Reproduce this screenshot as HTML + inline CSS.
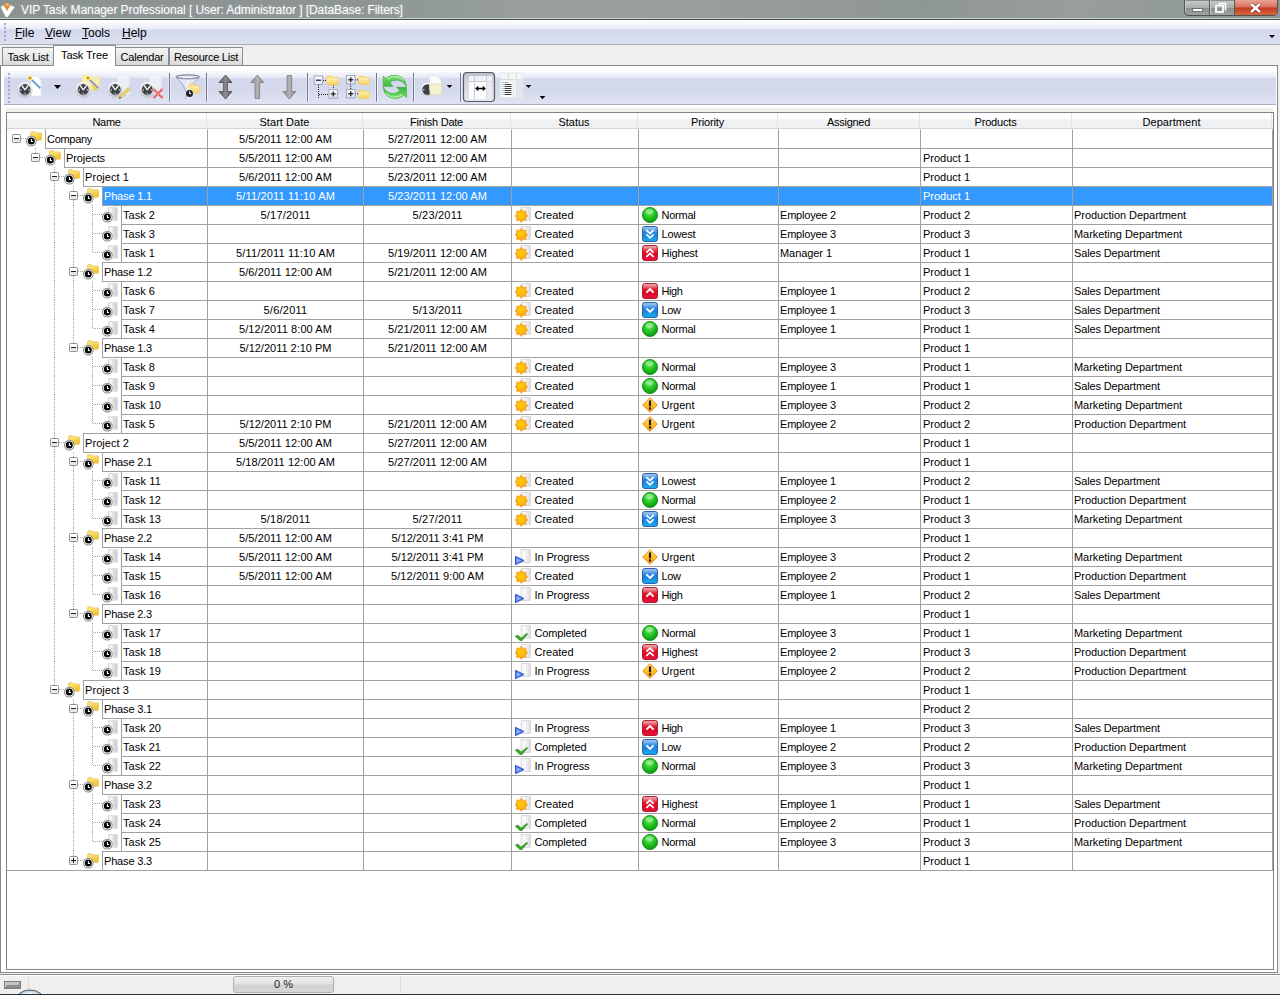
<!DOCTYPE html>
<html lang="en">
<head>
<meta charset="utf-8">
<title>VIP Task Manager Professional</title>
<style>
*{box-sizing:border-box;margin:0;padding:0}
html,body{width:1280px;height:995px;overflow:hidden;background:#f0f0f0}
body{position:relative;font-family:"Liberation Sans",sans-serif;font-size:11px;color:#000;line-height:1}
i{font-style:normal}
svg{display:block}
.abs{position:absolute}
/* ---------- title bar ---------- */
#title{position:absolute;left:0;top:0;width:1280px;height:18px;background:linear-gradient(100deg,#8a9292 0,#8d9595 28%,#999f9f 42%,#979d9d 58%,#8f9696 72%,#989e9e 84%,#8c9494 100%)}
#title .tx{position:absolute;left:21px;top:4px;font-size:12px;color:#fff;white-space:pre;letter-spacing:-.08px;text-shadow:0 0 3px rgba(255,255,255,.35)}
#tline1{position:absolute;left:0;top:18px;width:1280px;height:1px;background:#ccd0d0}
#tline2{position:absolute;left:0;top:19px;width:1280px;height:1px;background:#474c4c}
#wbtn{position:absolute;left:1184px;top:0;width:94px;height:16px}
/* ---------- menu ---------- */
#menu{position:absolute;left:0;top:20px;width:1280px;height:25px;background:linear-gradient(#fff 0,#fff 6%,#f6f6fb 16%,#eceef8 30%,#e8ebf7 36%,#d3d8eb 42%,#d5daed 56%,#dce0f1 100%);border-bottom:1px solid #a8abb5}
#menu .m{position:absolute;top:7px;font-size:12px;white-space:pre}
#menu .m u{text-decoration:underline;text-underline-offset:1px;text-decoration-thickness:1px}
.grip{position:absolute;width:2px;background:repeating-linear-gradient(#a3a9c6 0,#a3a9c6 2px,transparent 2px,transparent 4px)}
.grip:after{content:"";position:absolute;left:1px;top:1px;width:2px;height:100%;background:repeating-linear-gradient(rgba(255,255,255,.9) 0,rgba(255,255,255,.9) 2px,transparent 2px,transparent 4px);z-index:-1}
/* ---------- tabs ---------- */
.tab{position:absolute;top:47px;height:19px;border:1px solid #898c95;background:linear-gradient(#f4f4f4,#e9e9e9 50%,#d9d9d9);padding-top:4px;text-align:center;white-space:pre}
.tab.act{top:45px;height:21px;background:#fff;border-bottom:none;padding-top:3.5px;z-index:3}
#panel{position:absolute;left:0;top:65px;width:1278px;height:908px;background:#fff;border:1px solid #85888e}
/* ---------- toolbar ---------- */
#tb{position:absolute;left:4px;top:71px;width:1272px;height:34px;background:linear-gradient(#fafbfd 0,#f1f3fa 9%,#e8ebf7 19%,#d4d9ed 22%,#d3d8ec 55%,#dfe3f3 100%);border-bottom:1px solid #a9aec2}
.dd{position:absolute;width:0;height:0;border-left:3px solid transparent;border-right:3px solid transparent;border-top:3px solid #000}
/* ---------- grid ---------- */
#gridframe{position:absolute;left:6px;top:112px;width:1268px;height:858px;border:1px solid #808388;background:#fff}
#band{position:absolute;left:6px;top:108px;width:1267px;height:4px;background:#f0f0ee}
#hdrbg{position:absolute;left:7px;top:113px;width:1266px;height:16px;background:linear-gradient(#fff 0,#fff 38%,#f1f2f4 44%,#eff0f2 100%);border-bottom:1px solid #d5d5d5}
.h{position:absolute;top:113px;height:15px;text-align:center;padding-top:4px;border-right:1px solid #e2e3e6;white-space:pre}
.c{position:absolute;height:20px;border-left:1px solid #a0a0a0;border-bottom:1px solid #a0a0a0;border-top:1px solid #a0a0a0;padding:4px 0 0 1px;white-space:pre;overflow:hidden}
.c.last{border-right:1px solid #a0a0a0}
.c.r0{border-top-color:transparent}
.c.pr{padding-left:2px}
.c.ctr{text-align:center;padding-left:0}
.c.sel{background:#3399ff;color:#fff}
.c.wi{padding-left:0}
.c.wi .ic{position:absolute;left:3px;top:1px}
.c.wi .it{position:absolute;left:22.5px;top:4px}
.vl{position:absolute;width:1px;background-image:repeating-linear-gradient(#a8a8a8 0,#a8a8a8 1px,transparent 1px,transparent 2px)}
.hl{position:absolute;height:1px;background-image:repeating-linear-gradient(90deg,#a8a8a8 0,#a8a8a8 1px,transparent 1px,transparent 2px)}
.ex{position:absolute}
.ti{position:absolute;width:16px;height:16px}
/* ---------- status bar ---------- */
#sb{position:absolute;left:0;top:974px;width:1280px;height:21px;background:#f0efed;border-top:1px solid #8c8c8c;border-bottom:1px solid #303030}
#sb:before{content:"";position:absolute;left:0;top:0;width:1280px;height:1px;background:#fff}
#sb i{position:absolute;top:2px;width:1px;height:16px;background:#d9d9d9}
#prog{position:absolute;left:233px;top:976px;width:101px;height:17px;border:1px solid #aeaeae;border-radius:3px;background:linear-gradient(#efefef,#e3e3e3 45%,#d2d2d2 55%,#d6d6d6);text-align:center;padding-top:2px;color:#1a1a1a}
</style>
</head>
<body>
<svg width="0" height="0" style="position:absolute">
<defs>
<radialGradient id="gN" cx=".45" cy=".35" r=".7"><stop offset="0" stop-color="#6fe86a"/><stop offset=".5" stop-color="#20c41e"/><stop offset="1" stop-color="#0e8a10"/></radialGradient>
<linearGradient id="gB" x1="0" y1="0" x2="0" y2="1"><stop offset="0" stop-color="#b4d4f2"/><stop offset=".4" stop-color="#2a88e2"/><stop offset=".6" stop-color="#1a84e0"/><stop offset="1" stop-color="#1ab4ea"/></linearGradient>
<linearGradient id="gR" x1="0" y1="0" x2="0" y2="1"><stop offset="0" stop-color="#f2c4c8"/><stop offset=".4" stop-color="#e01a32"/><stop offset=".6" stop-color="#dc0a28"/><stop offset="1" stop-color="#ea1440"/></linearGradient>
<radialGradient id="gS" cx=".45" cy=".42" r=".6"><stop offset="0" stop-color="#ffd000"/><stop offset=".6" stop-color="#ffbe0a"/><stop offset="1" stop-color="#f8a41e"/></radialGradient>
<linearGradient id="gF" x1="0" y1="0" x2="1" y2="1"><stop offset="0" stop-color="#fbe070"/><stop offset=".5" stop-color="#f6cf44"/><stop offset="1" stop-color="#efbc2e"/></linearGradient>
<linearGradient id="gU" x1="0" y1="0" x2="0" y2="1"><stop offset="0" stop-color="#ffeb90"/><stop offset=".5" stop-color="#ffc428"/><stop offset="1" stop-color="#f6960e"/></linearGradient>
</defs>
</svg>

<!-- title bar -->
<div id="title">
  <svg class="abs" style="left:0;top:1px" width="16" height="17" viewBox="0 0 16 17"><path d="M1 6L3.500 4.600L7 10L10.500 4.600L14.200 6.200L7.600 15.800L5.800 15.800Z" fill="#fff"/><path d="M1 6L3.500 4.600L7 10L10.500 4.600L14.200 6.200L7.600 15.800L5.800 15.800Z" fill="none" stroke="#fff" stroke-width="1" stroke-linejoin="round" opacity=".6"/><path d="M3.800 3.200L7.200 1.600L10.600 3.200L7 9.800Z" fill="#e58a2c"/><path d="M4.600 3.200L7.200 2.100L9.600 3.200L7.600 5.500Z" fill="#f3b36a"/></svg>
  <div class="tx">VIP Task Manager Professional [ User: Administrator ] [DataBase: Filters]</div>
</div>
<div id="tline1"></div><div id="tline2"></div>
<div id="wbtn">
<svg width="94" height="16" viewBox="0 0 94 16">
<defs>
<linearGradient id="wg" x1="0" y1="0" x2="0" y2="1"><stop offset="0" stop-color="#c6cbcb"/><stop offset=".5" stop-color="#a9afaf"/><stop offset=".52" stop-color="#8a9191"/><stop offset="1" stop-color="#9ea5a5"/></linearGradient>
<linearGradient id="wr" x1="0" y1="0" x2="0" y2="1"><stop offset="0" stop-color="#e9a493"/><stop offset=".48" stop-color="#d9705a"/><stop offset=".52" stop-color="#c4391e"/><stop offset="1" stop-color="#d8663f"/></linearGradient>
</defs>
<path d="M.5 0V11Q.5 15.5 5 15.5H89Q93.5 15.5 93.5 11V0Z" fill="url(#wg)" stroke="#4e5454"/>
<path d="M51 0V15H89Q93 15 93 11V0Z" fill="url(#wr)"/>
<path d="M25.5 0V15M50.500 0V15" stroke="#565c5c"/>
<path d="M26.5 0V15M1.500 0V12" stroke="#d0d4d4" opacity=".7"/>
<rect x="8.500" y="8.500" width="10" height="3" fill="#fff" stroke="#5a6060" stroke-width=".8"/>
<path d="M34.500 3.500H41.500V10.500" fill="none" stroke="#fff" stroke-width="1.600"/>
<rect x="32" y="5.500" width="7" height="6.500" fill="none" stroke="#fff" stroke-width="1.800"/>
<path d="M67 4L76 12M76 4L67 12" stroke="#5a2a20" stroke-width="3.600"/>
<path d="M67 4L76 12M76 4L67 12" stroke="#fff" stroke-width="2.400"/>
</svg>
</div>

<!-- menu -->
<div id="menu">
  <i class="grip" style="left:4px;top:3px;height:19px"></i>
  <span class="m" style="left:15px"><u>F</u>ile</span>
  <span class="m" style="left:45px"><u>V</u>iew</span>
  <span class="m" style="left:82px"><u>T</u>ools</span>
  <span class="m" style="left:122px"><u>H</u>elp</span>
  <i class="dd" style="left:1269px;top:15px"></i>
</div>

<!-- tabs + panel -->
<div id="panel"></div>
<div class="tab" style="left:2px;width:52px"><span style="letter-spacing:-0.199px">Task List</span></div>
<div class="tab act" style="left:53px;width:63px"><span style="letter-spacing:-0.076px">Task Tree</span></div>
<div class="tab" style="left:115px;width:54px"><span style="letter-spacing:-0.205px">Calendar</span></div>
<div class="tab" style="left:169px;width:74px"><span style="letter-spacing:-0.250px">Resource List</span></div>

<!-- toolbar -->
<div id="tb">
  <i class="grip" style="left:4px;top:2px;height:30px"></i>
</div>
<svg class="abs" style="left:0;top:66px" width="600" height="44" viewBox="0 66 600 44">
<defs><linearGradient id="tbRing" x1="0" y1="0" x2="0" y2="1"><stop offset="0" stop-color="#ffffff"/><stop offset=".5" stop-color="#e6e7ea"/><stop offset="1" stop-color="#c2c4cc"/></linearGradient><linearGradient id="tbFold" x1="0" y1="0" x2="0" y2="1"><stop offset="0" stop-color="#f8dc78"/><stop offset=".4" stop-color="#fce99a"/><stop offset="1" stop-color="#f5d160"/></linearGradient><linearGradient id="tbBox" x1="0" y1="0" x2="0" y2="1"><stop offset="0" stop-color="#ffffff"/><stop offset="1" stop-color="#dfe3ec"/></linearGradient><linearGradient id="tbArr" x1="0" y1="0" x2="1" y2="0"><stop offset="0" stop-color="#8b8b8b"/><stop offset=".5" stop-color="#b2b2b2"/><stop offset="1" stop-color="#8b8b8b"/></linearGradient><linearGradient id="tbArrD" x1="0" y1="0" x2="1" y2="0"><stop offset="0" stop-color="#5c5c5c"/><stop offset=".5" stop-color="#8c8c8c"/><stop offset="1" stop-color="#5c5c5c"/></linearGradient><linearGradient id="tbGr" x1="0" y1="0" x2="0" y2="1"><stop offset="0" stop-color="#8fe283"/><stop offset=".5" stop-color="#55c94f"/><stop offset="1" stop-color="#3fb43c"/></linearGradient><linearGradient id="tbPr" x1="0" y1="0" x2="0" y2="1"><stop offset="0" stop-color="#b9bdc6"/><stop offset=".25" stop-color="#cfd2da"/><stop offset="1" stop-color="#e6e8ee"/></linearGradient><linearGradient id="tbFun" x1="0" y1="0" x2="1" y2="0"><stop offset="0" stop-color="#c9ccd2"/><stop offset=".45" stop-color="#f4f5f7"/><stop offset="1" stop-color="#b4b8c0"/></linearGradient></defs>
<path d="M31 76H37L41 80V96H31Z" fill="#fff" stroke="#e1e3ec" stroke-width=".8"/>
<path d="M31.7 79.7L40.3 88.3" stroke="#4d86c8" stroke-width="2.1"/><path d="M31.7 79.7L40.3 88.3" stroke="#e3ecf8" stroke-width="2.100" stroke-dasharray=".55 .9" opacity=".8"/><circle cx="30.0" cy="78.0" r="3" fill="#fff6b0" opacity=".55"/><path d="M28.2 78.0H31.8M30.0 76.2V79.8" stroke="#e0ad08" stroke-width="1.3"/><rect x="29.5" y="77.5" width="1" height="1" fill="#6a5200"/>
<circle cx="25" cy="90.4" r="7.9" fill="#8a90a8" opacity=".22"/><circle cx="25" cy="89.5" r="7.6" fill="url(#tbRing)"/><circle cx="25" cy="89.5" r="5.4" fill="#3d4043"/><circle cx="25" cy="89.5" r="5.8" fill="none" stroke="#a6a8ae" stroke-width=".6"/><path d="M21.8 85.4L25 89.9L28.2 85.4" fill="none" stroke="#fff" stroke-width="1.4" stroke-linejoin="miter"/><path d="M25 89.8V91.7" stroke="#5a5d8a" stroke-width="1"/><circle cx="21" cy="89.9" r=".65" fill="#fff"/><circle cx="29" cy="89.9" r=".65" fill="#fff"/><circle cx="25" cy="93.6" r=".65" fill="#fff"/>
<path d="M54.0 85H61.0L57.5 89Z" fill="#000"/>
<path d="M82 77.500Q82 75.500 84 75.500H89.500L91 77H97.500Q99.500 77 99.500 79V87Q99.500 89 97.500 89H84Q82 89 82 87Z" fill="#fcf0a8" stroke="#f7e396" stroke-width=".8" opacity=".9"/>
<path d="M89.7 79.7L98.3 88.3" stroke="#7c7aa8" stroke-width="2.1"/><path d="M89.7 79.7L98.3 88.3" stroke="#e3ecf8" stroke-width="2.100" stroke-dasharray=".55 .9" opacity=".8"/><circle cx="88.0" cy="78.0" r="3" fill="#fff6b0" opacity=".55"/><path d="M86.2 78.0H89.8M88.0 76.2V79.8" stroke="#e0ad08" stroke-width="1.3"/><rect x="87.5" y="77.5" width="1" height="1" fill="#6a5200"/>
<path d="M92.500 85.500L96.500 90.500" stroke="#e6dc3c" stroke-width="2.600"/>
<circle cx="83.3" cy="90.4" r="7.9" fill="#8a90a8" opacity=".22"/><circle cx="83.3" cy="89.5" r="7.6" fill="url(#tbRing)"/><circle cx="83.3" cy="89.5" r="5.4" fill="#3d4043"/><circle cx="83.3" cy="89.5" r="5.8" fill="none" stroke="#a6a8ae" stroke-width=".6"/><path d="M80.1 85.4L83.3 89.9L86.5 85.4" fill="none" stroke="#fff" stroke-width="1.4" stroke-linejoin="miter"/><path d="M83.3 89.8V91.7" stroke="#5a5d8a" stroke-width="1"/><circle cx="79.3" cy="89.9" r=".65" fill="#fff"/><circle cx="87.3" cy="89.9" r=".65" fill="#fff"/><circle cx="83.3" cy="93.6" r=".65" fill="#fff"/>
<path d="M117.500 74.500H125L129.500 79V95H117.500Z" fill="#f6f6f9" stroke="#e2e4ec" stroke-width=".7" opacity=".75"/>
<circle cx="115.3" cy="90.4" r="7.9" fill="#8a90a8" opacity=".22"/><circle cx="115.3" cy="89.5" r="7.6" fill="url(#tbRing)"/><circle cx="115.3" cy="89.5" r="5.4" fill="#3d4043"/><circle cx="115.3" cy="89.5" r="5.8" fill="none" stroke="#a6a8ae" stroke-width=".6"/><path d="M112.1 85.4L115.3 89.9L118.5 85.4" fill="none" stroke="#fff" stroke-width="1.4" stroke-linejoin="miter"/><path d="M115.3 89.8V91.7" stroke="#5a5d8a" stroke-width="1"/><circle cx="111.3" cy="89.9" r=".65" fill="#fff"/><circle cx="119.3" cy="89.9" r=".65" fill="#fff"/><circle cx="115.3" cy="93.6" r=".65" fill="#fff"/>
<path d="M119.200 98.600L120 95.700L128.300 87.400L130.200 89.300L121.900 97.600Z" fill="#ecc957" stroke="#c7a544" stroke-width=".5"/><path d="M119.200 98.600L119.800 96.600L121.100 97.900Z" fill="#3a3020"/><path d="M121 96.600L129.200 88.400" stroke="#f9e7a0" stroke-width=".7"/>
<path d="M149.500 74.500H157L161.500 79V95H149.500Z" fill="#f6f6f9" stroke="#e2e4ec" stroke-width=".7" opacity=".75"/>
<circle cx="147.3" cy="90.4" r="7.9" fill="#8a90a8" opacity=".22"/><circle cx="147.3" cy="89.5" r="7.6" fill="url(#tbRing)"/><circle cx="147.3" cy="89.5" r="5.4" fill="#3d4043"/><circle cx="147.3" cy="89.5" r="5.8" fill="none" stroke="#a6a8ae" stroke-width=".6"/><path d="M144.10000000000002 85.4L147.3 89.9L150.5 85.4" fill="none" stroke="#fff" stroke-width="1.4" stroke-linejoin="miter"/><path d="M147.3 89.8V91.7" stroke="#5a5d8a" stroke-width="1"/><circle cx="143.3" cy="89.9" r=".65" fill="#fff"/><circle cx="151.3" cy="89.9" r=".65" fill="#fff"/><circle cx="147.3" cy="93.6" r=".65" fill="#fff"/>
<path d="M153.500 89L162.500 98M162.500 89L153.500 98" stroke="#e4494a" stroke-width="2.200"/><path d="M153.500 89L162.500 98M162.500 89L153.500 98" stroke="#fbd0c8" stroke-width="2.200" stroke-dasharray=".7 1.100" opacity=".7"/>
<path d="M169.5 73V101.500" stroke="#71768f"/><path d="M170.5 73V101.500" stroke="#f4f6fb" opacity=".8"/><path d="M168.5 73V101.500" stroke="#f4f6fb" opacity=".45"/>
<path d="M177 78Q183 83 185.800 90.500V98.500Q187.500 100 189.800 98.500V90Q192 83.500 198.500 78Z" fill="#f2f4f9" opacity=".55"/>
<path d="M177 78.300Q183 83 185.800 90.500V98.800" fill="none" stroke="#9aa1b6" stroke-width=".9"/>
<path d="M198.500 78.300Q193.500 82 191.500 86" fill="none" stroke="#a8aec2" stroke-width=".9"/>
<path d="M187.800 80V97" stroke="#fff" stroke-width="1.600" opacity=".8"/>
<ellipse cx="187.700" cy="76.800" rx="11.600" ry="1.900" fill="#e9ecf3" stroke="#80869a" stroke-width="1.300"/>
<path d="M178 77.800Q187.700 80.300 197.400 77.800" fill="none" stroke="#a4aabc" stroke-width=".8"/>
<path d="M188.5 85.6Q188.5 84 190.1 84H193.12L194.22 85.2H198.1Q199.5 85.2 199.5 86.6V91.6Q199.5 93 198.1 93H189.9Q188.5 93 188.5 91.6Z" fill="url(#tbFold)" stroke="#efcb5e" stroke-width=".6" opacity="1"/><path d="M189.3 87H198.7" stroke="#fff3b8" stroke-width=".9" opacity=".9"/>
<circle cx="189.500" cy="93.500" r="4.400" fill="#e4e6ec"/><circle cx="189.500" cy="93.500" r="3.500" fill="#1e2024"/><path d="M189.600 91.400V93.700H191.200" stroke="#fff" stroke-width="1" fill="none"/>
<path d="M206.5 73V101.500" stroke="#71768f"/><path d="M207.5 73V101.500" stroke="#f4f6fb" opacity=".8"/><path d="M205.5 73V101.500" stroke="#f4f6fb" opacity=".45"/>
<path d="M225.5 75L232.0 82.500H227.4V91.500H232.0L225.5 99L219.0 91.500H223.6V82.500H219.0Z" fill="url(#tbArrD)" stroke="#4a4a4a" stroke-width=".8" stroke-linejoin="round"/>
<path d="M257.3 75L263.8 82.500H259.6V98.500H255.0V82.500H250.8Z" fill="url(#tbArr)" stroke="#7c7c7c" stroke-width=".8" stroke-linejoin="round"/>
<path d="M289.4 99L295.9 91.500H291.7V75.500H287.09999999999997V91.500H282.9Z" fill="url(#tbArr)" stroke="#7c7c7c" stroke-width=".8" stroke-linejoin="round"/>
<path d="M307.5 73V101.500" stroke="#71768f"/><path d="M308.5 73V101.500" stroke="#f4f6fb" opacity=".8"/><path d="M306.5 73V101.500" stroke="#f4f6fb" opacity=".45"/>
<path d="M318.500 85V99M319 94.500H329M333.500 85V90" stroke="#222" stroke-width="1" stroke-dasharray="1 1"/>
<path d="M323 80.500H327" stroke="#222" stroke-width="1" stroke-dasharray="1 1"/>
<rect x="314.2" y="76" width="8.500" height="8.500" fill="url(#tbBox)" stroke="#9aa3b8" stroke-width=".9"/><path d="M316.0 80.25H320.9" stroke="#222" stroke-width="1.3"/>
<path d="M326.5 77.6Q326.5 76 328.1 76H331.54L332.74 77.2H337.1Q338.5 77.2 338.5 78.6V83.6Q338.5 85 337.1 85H327.9Q326.5 85 326.5 83.6Z" fill="url(#tbFold)" stroke="#efcb5e" stroke-width=".6" opacity="1"/><path d="M327.3 79H337.7" stroke="#fff3b8" stroke-width=".9" opacity=".9"/>
<rect x="329" y="89.7" width="8.500" height="8.500" fill="url(#tbBox)" stroke="#9aa3b8" stroke-width=".9"/><path d="M330.8 93.95H335.7" stroke="#222" stroke-width="1.3"/><path d="M333.25 91.5V96.4" stroke="#222" stroke-width="1.3"/>
<path d="M350.700 84V90M355 79.800H359M355 93.800H359" stroke="#222" stroke-width="1" stroke-dasharray="1 1"/>
<rect x="346.5" y="75.5" width="8.500" height="8.500" fill="url(#tbBox)" stroke="#9aa3b8" stroke-width=".9"/><path d="M348.3 79.75H353.2" stroke="#222" stroke-width="1.3"/><path d="M350.75 77.3V82.2" stroke="#222" stroke-width="1.3"/>
<path d="M358.5 77.6Q358.5 76 360.1 76H363.12L364.22 77.2H368.1Q369.5 77.2 369.5 78.6V83.1Q369.5 84.5 368.1 84.5H359.9Q358.5 84.5 358.5 83.1Z" fill="url(#tbFold)" stroke="#efcb5e" stroke-width=".6" opacity="1"/><path d="M359.3 79H368.7" stroke="#fff3b8" stroke-width=".9" opacity=".9"/>
<rect x="346.5" y="89.5" width="8.500" height="8.500" fill="url(#tbBox)" stroke="#9aa3b8" stroke-width=".9"/><path d="M348.3 93.75H353.2" stroke="#222" stroke-width="1.3"/><path d="M350.75 91.3V96.2" stroke="#222" stroke-width="1.3"/>
<path d="M358.5 91.6Q358.5 90 360.1 90H363.12L364.22 91.2H368.1Q369.5 91.2 369.5 92.6V97.1Q369.5 98.5 368.1 98.5H359.9Q358.5 98.5 358.5 97.1Z" fill="url(#tbFold)" stroke="#efcb5e" stroke-width=".6" opacity="1"/><path d="M359.3 93H368.7" stroke="#fff3b8" stroke-width=".9" opacity=".9"/>
<path d="M376.5 73V101.500" stroke="#71768f"/><path d="M377.5 73V101.500" stroke="#f4f6fb" opacity=".8"/><path d="M375.5 73V101.500" stroke="#f4f6fb" opacity=".45"/>
<path d="M383.200 76L385.700 78.500Q390 74.700 396 75.200Q405.200 76.400 406.400 86.600Q403 80.200 396.500 80.100Q392 80.200 389.800 83L393 86.300H383.200Z" fill="url(#tbGr)" stroke="#3fae3f" stroke-width=".7" stroke-linejoin="round"/><path d="M387 79.300Q391 76.300 396 76.600Q401 77 403.600 80.600" fill="none" stroke="#c6f5bd" stroke-width="1.100" opacity=".85"/>
<g transform="rotate(180 394.800 86.800)"><path d="M383.200 76L385.700 78.500Q390 74.700 396 75.200Q405.200 76.400 406.400 86.600Q403 80.200 396.500 80.100Q392 80.200 389.800 83L393 86.300H383.200Z" fill="url(#tbGr)" stroke="#3fae3f" stroke-width=".7" stroke-linejoin="round"/><path d="M387 79.300Q391 76.300 396 76.600Q401 77 403.600 80.600" fill="none" stroke="#c6f5bd" stroke-width="1.100" opacity=".85"/></g>
<path d="M413.5 73V101.500" stroke="#71768f"/><path d="M414.5 73V101.500" stroke="#f4f6fb" opacity=".8"/><path d="M412.5 73V101.500" stroke="#f4f6fb" opacity=".45"/>
<circle cx="427.500" cy="89.500" r="6.800" fill="url(#tbRing)"/><circle cx="427.500" cy="89.500" r="5.200" fill="#3b3e44"/><circle cx="423.800" cy="89.800" r=".7" fill="#fff"/>
<path d="M429.500 75.500H437L441 79.500V90H429.500Z" fill="#fbfbfc" stroke="#e0e2e8" stroke-width=".7"/>
<path d="M430 84H441.500V94.500H430Z" fill="#f6f1cf" stroke="#e4dcae" stroke-width=".7"/>
<path d="M446.7 84.9H452.3L449.5 88.1Z" fill="#000"/>
<path d="M460.5 73V101.500" stroke="#71768f"/><path d="M461.5 73V101.500" stroke="#f4f6fb" opacity=".8"/><path d="M459.5 73V101.500" stroke="#f4f6fb" opacity=".45"/>
<rect x="463.500" y="72.500" width="31" height="29" rx="3.500" fill="url(#tbPr)" stroke="#565b66" stroke-width="1.200"/>
<rect x="469" y="76" width="23" height="23" fill="#fdfdfd"/>
<path d="M469 76H492V81H469Z" fill="#f0f1f3"/>
<path d="M474.500 76V99M486.500 76V99M469 81.500H492" stroke="#c9ccd3" stroke-width="1"/>
<path d="M486.500 81.500V99H492V81.500Z" fill="#e9ebee"/>
<path d="M475.200 88.500L478.200 85.700V87.700H482.800V85.700L485.800 88.500L482.800 91.300V89.300H478.200V91.300Z" fill="#000"/>
<rect x="500" y="73" width="23" height="25" fill="#f3f4f6" stroke="#e2e4e9" stroke-width=".6"/>
<path d="M508.500 73V98M516.500 73V98M500 79.500H523" stroke="#dadde3" stroke-width="1"/>
<path d="M516.500 79.500H523V98H516.500Z" fill="#e4e6ea"/>
<path d="M501 80H510L513 83V97.500H501Z" fill="#fff" stroke="#d4d7de" stroke-width=".6"/>
<path d="M504.500 82.5H508" stroke="#9a9a9a" stroke-width="1"/><rect x="502.500" y="82.0" width="1" height="1" fill="#6a7cae"/>
<path d="M504.500 84.5H511.5" stroke="#3a3a3a" stroke-width="1"/><rect x="502.500" y="84.0" width="1" height="1" fill="#6a7cae"/>
<path d="M504.500 86.5H511.5" stroke="#3a3a3a" stroke-width="1"/><rect x="502.500" y="86.0" width="1" height="1" fill="#6a7cae"/>
<path d="M504.500 88.5H511.5" stroke="#3a3a3a" stroke-width="1"/><rect x="502.500" y="88.0" width="1" height="1" fill="#6a7cae"/>
<path d="M504.500 90.5H511.5" stroke="#3a3a3a" stroke-width="1"/><rect x="502.500" y="90.0" width="1" height="1" fill="#6a7cae"/>
<path d="M504.500 92.5H511.5" stroke="#3a3a3a" stroke-width="1"/><rect x="502.500" y="92.0" width="1" height="1" fill="#6a7cae"/>
<path d="M504.500 94.5H511.5" stroke="#3a3a3a" stroke-width="1"/><rect x="502.500" y="94.0" width="1" height="1" fill="#6a7cae"/>
<path d="M525.7 84.9H531.3L528.5 88.1Z" fill="#000"/>
<path d="M539.7 96.0H545.3L542.5 99.19999999999999Z" fill="#000"/>
</svg>

<!-- grid -->
<div id="band"></div>
<div id="gridframe"></div>
<div id="hdrbg"></div>
<div class="h" style="left:7px;width:200px"><span style="letter-spacing:-0.336px">Name</span></div>
<div class="h" style="left:207px;width:156px"><span style="letter-spacing:0.048px">Start Date</span></div>
<div class="h" style="left:363px;width:148px"><span style="letter-spacing:-0.239px">Finish Date</span></div>
<div class="h" style="left:511px;width:127px"><span style="letter-spacing:-0.031px">Status</span></div>
<div class="h" style="left:638px;width:140px"><span style="letter-spacing:-0.153px">Priority</span></div>
<div class="h" style="left:778px;width:142px"><span style="letter-spacing:-0.281px">Assigned</span></div>
<div class="h" style="left:920px;width:152px"><span style="letter-spacing:-0.176px">Products</span></div>
<div class="h" style="left:1072px;width:200px"><span style="letter-spacing:0.053px">Department</span></div>
<div class="c nm r0" style="left:45px;top:129px;width:162px"><span style="letter-spacing:-0.297px">Company</span></div>
<div class="c ctr r0" style="left:207px;top:129px;width:156px"><span style="letter-spacing:0.086px">5/5/2011 12:00 AM</span></div>
<div class="c ctr r0" style="left:363px;top:129px;width:148px"><span style="letter-spacing:0.075px">5/27/2011 12:00 AM</span></div>
<div class="c r0" style="left:511px;top:129px;width:127px"></div>
<div class="c r0" style="left:638px;top:129px;width:140px"></div>
<div class="c r0" style="left:778px;top:129px;width:142px"></div>
<div class="c pr r0" style="left:920px;top:129px;width:152px"></div>
<div class="c last r0" style="left:1072px;top:129px;width:201px"></div>
<div class="c nm" style="left:64px;top:148px;width:143px"><span style="letter-spacing:-0.092px">Projects</span></div>
<div class="c ctr" style="left:207px;top:148px;width:156px"><span style="letter-spacing:0.086px">5/5/2011 12:00 AM</span></div>
<div class="c ctr" style="left:363px;top:148px;width:148px"><span style="letter-spacing:0.075px">5/27/2011 12:00 AM</span></div>
<div class="c" style="left:511px;top:148px;width:127px"></div>
<div class="c" style="left:638px;top:148px;width:140px"></div>
<div class="c" style="left:778px;top:148px;width:142px"></div>
<div class="c pr" style="left:920px;top:148px;width:152px"><span style="letter-spacing:-0.009px">Product 1</span></div>
<div class="c last" style="left:1072px;top:148px;width:201px"></div>
<div class="c nm" style="left:83px;top:167px;width:124px"><span style="letter-spacing:0.066px">Project 1</span></div>
<div class="c ctr" style="left:207px;top:167px;width:156px"><span style="letter-spacing:0.086px">5/6/2011 12:00 AM</span></div>
<div class="c ctr" style="left:363px;top:167px;width:148px"><span style="letter-spacing:0.075px">5/23/2011 12:00 AM</span></div>
<div class="c" style="left:511px;top:167px;width:127px"></div>
<div class="c" style="left:638px;top:167px;width:140px"></div>
<div class="c" style="left:778px;top:167px;width:142px"></div>
<div class="c pr" style="left:920px;top:167px;width:152px"><span style="letter-spacing:-0.009px">Product 1</span></div>
<div class="c last" style="left:1072px;top:167px;width:201px"></div>
<div class="c nm sel" style="left:102px;top:186px;width:105px"><span style="letter-spacing:-0.171px">Phase 1.1</span></div>
<div class="c ctr sel" style="left:207px;top:186px;width:156px"><span style="letter-spacing:0.166px">5/11/2011 11:10 AM</span></div>
<div class="c ctr sel" style="left:363px;top:186px;width:148px"><span style="letter-spacing:0.075px">5/23/2011 12:00 AM</span></div>
<div class="c sel" style="left:511px;top:186px;width:127px"></div>
<div class="c sel" style="left:638px;top:186px;width:140px"></div>
<div class="c sel" style="left:778px;top:186px;width:142px"></div>
<div class="c sel pr" style="left:920px;top:186px;width:152px"><span style="letter-spacing:-0.009px">Product 1</span></div>
<div class="c sel last" style="left:1072px;top:186px;width:201px"></div>
<div class="c nm" style="left:121px;top:205px;width:86px"><span style="letter-spacing:0.035px">Task 2</span></div>
<div class="c ctr" style="left:207px;top:205px;width:156px"><span style="letter-spacing:0.209px">5/17/2011</span></div>
<div class="c ctr" style="left:363px;top:205px;width:148px"><span style="letter-spacing:0.209px">5/23/2011</span></div>
<div class="c wi" style="left:511px;top:205px;width:127px"><svg class="ic" width="16" height="16" viewBox="0 0 16 16" style=""><path d="M6.2 .6H15.5V13.4H6.2Z" fill="#f8f8fa" stroke="#c6c6ce" stroke-width=".7"/><path d="M11 1H15.1V13H11Z" fill="#ececf0"/><path d="M13.2 1H15.1V13H13.2Z" fill="#e2e2e6"/><path d="M6.30 2.10L8.18 4.27L11.04 4.06L10.83 6.92L13.00 8.80L10.83 10.68L11.04 13.54L8.18 13.33L6.30 15.50L4.42 13.33L1.56 13.54L1.77 10.68L-0.40 8.80L1.77 6.92L1.56 4.06L4.42 4.27Z" fill="#f6a322" stroke="#f7b040" stroke-width=".8" stroke-linejoin="round"/><circle cx="6.3" cy="8.8" r="4.6" fill="url(#gS)"/></svg><span class="it"><span style="letter-spacing:-0.019px">Created</span></span></div>
<div class="c wi" style="left:638px;top:205px;width:140px"><svg class="ic" width="16" height="16" viewBox="0 0 16 16" style=""><circle cx="8" cy="8" r="7.6" fill="url(#gN)" stroke="#0e8512" stroke-width=".8"/><ellipse cx="7.600" cy="4.400" rx="4.200" ry="2.500" fill="#fff" opacity=".35"/></svg><span class="it"><span style="letter-spacing:-0.242px">Normal</span></span></div>
<div class="c" style="left:778px;top:205px;width:142px"><span style="letter-spacing:-0.209px">Employee 2</span></div>
<div class="c pr" style="left:920px;top:205px;width:152px"><span style="letter-spacing:-0.009px">Product 2</span></div>
<div class="c last" style="left:1072px;top:205px;width:201px"><span style="letter-spacing:-0.053px">Production Department</span></div>
<div class="c nm" style="left:121px;top:224px;width:86px"><span style="letter-spacing:0.035px">Task 3</span></div>
<div class="c ctr" style="left:207px;top:224px;width:156px"></div>
<div class="c ctr" style="left:363px;top:224px;width:148px"></div>
<div class="c wi" style="left:511px;top:224px;width:127px"><svg class="ic" width="16" height="16" viewBox="0 0 16 16" style=""><path d="M6.2 .6H15.5V13.4H6.2Z" fill="#f8f8fa" stroke="#c6c6ce" stroke-width=".7"/><path d="M11 1H15.1V13H11Z" fill="#ececf0"/><path d="M13.2 1H15.1V13H13.2Z" fill="#e2e2e6"/><path d="M6.30 2.10L8.18 4.27L11.04 4.06L10.83 6.92L13.00 8.80L10.83 10.68L11.04 13.54L8.18 13.33L6.30 15.50L4.42 13.33L1.56 13.54L1.77 10.68L-0.40 8.80L1.77 6.92L1.56 4.06L4.42 4.27Z" fill="#f6a322" stroke="#f7b040" stroke-width=".8" stroke-linejoin="round"/><circle cx="6.3" cy="8.8" r="4.6" fill="url(#gS)"/></svg><span class="it"><span style="letter-spacing:-0.019px">Created</span></span></div>
<div class="c wi" style="left:638px;top:224px;width:140px"><svg class="ic" width="16" height="16" viewBox="0 0 16 16" style=""><rect x=".6" y=".6" width="14.8" height="14.8" rx="2" fill="url(#gB)" stroke="#1a56ae" stroke-width="1"/><path d="M4.4 4.2L8 7.6L11.6 4.2M4.4 8.4L8 11.8L11.6 8.4" fill="none" stroke="#fff" stroke-width="1.8"/></svg><span class="it"><span style="letter-spacing:-0.142px">Lowest</span></span></div>
<div class="c" style="left:778px;top:224px;width:142px"><span style="letter-spacing:-0.209px">Employee 3</span></div>
<div class="c pr" style="left:920px;top:224px;width:152px"><span style="letter-spacing:-0.009px">Product 3</span></div>
<div class="c last" style="left:1072px;top:224px;width:201px"><span style="letter-spacing:-0.041px">Marketing Department</span></div>
<div class="c nm" style="left:121px;top:243px;width:86px"><span style="letter-spacing:0.035px">Task 1</span></div>
<div class="c ctr" style="left:207px;top:243px;width:156px"><span style="letter-spacing:0.166px">5/11/2011 11:10 AM</span></div>
<div class="c ctr" style="left:363px;top:243px;width:148px"><span style="letter-spacing:0.075px">5/19/2011 12:00 AM</span></div>
<div class="c wi" style="left:511px;top:243px;width:127px"><svg class="ic" width="16" height="16" viewBox="0 0 16 16" style=""><path d="M6.2 .6H15.5V13.4H6.2Z" fill="#f8f8fa" stroke="#c6c6ce" stroke-width=".7"/><path d="M11 1H15.1V13H11Z" fill="#ececf0"/><path d="M13.2 1H15.1V13H13.2Z" fill="#e2e2e6"/><path d="M6.30 2.10L8.18 4.27L11.04 4.06L10.83 6.92L13.00 8.80L10.83 10.68L11.04 13.54L8.18 13.33L6.30 15.50L4.42 13.33L1.56 13.54L1.77 10.68L-0.40 8.80L1.77 6.92L1.56 4.06L4.42 4.27Z" fill="#f6a322" stroke="#f7b040" stroke-width=".8" stroke-linejoin="round"/><circle cx="6.3" cy="8.8" r="4.6" fill="url(#gS)"/></svg><span class="it"><span style="letter-spacing:-0.019px">Created</span></span></div>
<div class="c wi" style="left:638px;top:243px;width:140px"><svg class="ic" width="16" height="16" viewBox="0 0 16 16" style=""><rect x=".6" y=".6" width="14.8" height="14.8" rx="2" fill="url(#gR)" stroke="#aa1020" stroke-width="1"/><path d="M4.4 7.6L8 4.2L11.6 7.6M4.4 11.8L8 8.4L11.6 11.8" fill="none" stroke="#fff" stroke-width="1.8"/></svg><span class="it"><span style="letter-spacing:-0.185px">Highest</span></span></div>
<div class="c" style="left:778px;top:243px;width:142px"><span style="letter-spacing:-0.065px">Manager 1</span></div>
<div class="c pr" style="left:920px;top:243px;width:152px"><span style="letter-spacing:-0.009px">Product 1</span></div>
<div class="c last" style="left:1072px;top:243px;width:201px"><span style="letter-spacing:-0.128px">Sales Department</span></div>
<div class="c nm" style="left:102px;top:262px;width:105px"><span style="letter-spacing:-0.171px">Phase 1.2</span></div>
<div class="c ctr" style="left:207px;top:262px;width:156px"><span style="letter-spacing:0.086px">5/6/2011 12:00 AM</span></div>
<div class="c ctr" style="left:363px;top:262px;width:148px"><span style="letter-spacing:0.075px">5/21/2011 12:00 AM</span></div>
<div class="c" style="left:511px;top:262px;width:127px"></div>
<div class="c" style="left:638px;top:262px;width:140px"></div>
<div class="c" style="left:778px;top:262px;width:142px"></div>
<div class="c pr" style="left:920px;top:262px;width:152px"><span style="letter-spacing:-0.009px">Product 1</span></div>
<div class="c last" style="left:1072px;top:262px;width:201px"></div>
<div class="c nm" style="left:121px;top:281px;width:86px"><span style="letter-spacing:0.035px">Task 6</span></div>
<div class="c ctr" style="left:207px;top:281px;width:156px"></div>
<div class="c ctr" style="left:363px;top:281px;width:148px"></div>
<div class="c wi" style="left:511px;top:281px;width:127px"><svg class="ic" width="16" height="16" viewBox="0 0 16 16" style=""><path d="M6.2 .6H15.5V13.4H6.2Z" fill="#f8f8fa" stroke="#c6c6ce" stroke-width=".7"/><path d="M11 1H15.1V13H11Z" fill="#ececf0"/><path d="M13.2 1H15.1V13H13.2Z" fill="#e2e2e6"/><path d="M6.30 2.10L8.18 4.27L11.04 4.06L10.83 6.92L13.00 8.80L10.83 10.68L11.04 13.54L8.18 13.33L6.30 15.50L4.42 13.33L1.56 13.54L1.77 10.68L-0.40 8.80L1.77 6.92L1.56 4.06L4.42 4.27Z" fill="#f6a322" stroke="#f7b040" stroke-width=".8" stroke-linejoin="round"/><circle cx="6.3" cy="8.8" r="4.6" fill="url(#gS)"/></svg><span class="it"><span style="letter-spacing:-0.019px">Created</span></span></div>
<div class="c wi" style="left:638px;top:281px;width:140px"><svg class="ic" width="16" height="16" viewBox="0 0 16 16" style=""><rect x=".6" y=".6" width="14.8" height="14.8" rx="2" fill="url(#gR)" stroke="#aa1020" stroke-width="1"/><path d="M4.4 9.6L8 6L11.6 9.6" fill="none" stroke="#fff" stroke-width="1.9"/></svg><span class="it"><span style="letter-spacing:-0.406px">High</span></span></div>
<div class="c" style="left:778px;top:281px;width:142px"><span style="letter-spacing:-0.209px">Employee 1</span></div>
<div class="c pr" style="left:920px;top:281px;width:152px"><span style="letter-spacing:-0.009px">Product 2</span></div>
<div class="c last" style="left:1072px;top:281px;width:201px"><span style="letter-spacing:-0.128px">Sales Department</span></div>
<div class="c nm" style="left:121px;top:300px;width:86px"><span style="letter-spacing:0.035px">Task 7</span></div>
<div class="c ctr" style="left:207px;top:300px;width:156px"><span style="letter-spacing:0.250px">5/6/2011</span></div>
<div class="c ctr" style="left:363px;top:300px;width:148px"><span style="letter-spacing:0.209px">5/13/2011</span></div>
<div class="c wi" style="left:511px;top:300px;width:127px"><svg class="ic" width="16" height="16" viewBox="0 0 16 16" style=""><path d="M6.2 .6H15.5V13.4H6.2Z" fill="#f8f8fa" stroke="#c6c6ce" stroke-width=".7"/><path d="M11 1H15.1V13H11Z" fill="#ececf0"/><path d="M13.2 1H15.1V13H13.2Z" fill="#e2e2e6"/><path d="M6.30 2.10L8.18 4.27L11.04 4.06L10.83 6.92L13.00 8.80L10.83 10.68L11.04 13.54L8.18 13.33L6.30 15.50L4.42 13.33L1.56 13.54L1.77 10.68L-0.40 8.80L1.77 6.92L1.56 4.06L4.42 4.27Z" fill="#f6a322" stroke="#f7b040" stroke-width=".8" stroke-linejoin="round"/><circle cx="6.3" cy="8.8" r="4.6" fill="url(#gS)"/></svg><span class="it"><span style="letter-spacing:-0.019px">Created</span></span></div>
<div class="c wi" style="left:638px;top:300px;width:140px"><svg class="ic" width="16" height="16" viewBox="0 0 16 16" style=""><rect x=".6" y=".6" width="14.8" height="14.8" rx="2" fill="url(#gB)" stroke="#1a56ae" stroke-width="1"/><path d="M4.4 6.4L8 10L11.6 6.4" fill="none" stroke="#fff" stroke-width="1.9"/></svg><span class="it"><span style="letter-spacing:-0.393px">Low</span></span></div>
<div class="c" style="left:778px;top:300px;width:142px"><span style="letter-spacing:-0.209px">Employee 1</span></div>
<div class="c pr" style="left:920px;top:300px;width:152px"><span style="letter-spacing:-0.009px">Product 3</span></div>
<div class="c last" style="left:1072px;top:300px;width:201px"><span style="letter-spacing:-0.128px">Sales Department</span></div>
<div class="c nm" style="left:121px;top:319px;width:86px"><span style="letter-spacing:0.035px">Task 4</span></div>
<div class="c ctr" style="left:207px;top:319px;width:156px"><span style="letter-spacing:0.086px">5/12/2011 8:00 AM</span></div>
<div class="c ctr" style="left:363px;top:319px;width:148px"><span style="letter-spacing:0.075px">5/21/2011 12:00 AM</span></div>
<div class="c wi" style="left:511px;top:319px;width:127px"><svg class="ic" width="16" height="16" viewBox="0 0 16 16" style=""><path d="M6.2 .6H15.5V13.4H6.2Z" fill="#f8f8fa" stroke="#c6c6ce" stroke-width=".7"/><path d="M11 1H15.1V13H11Z" fill="#ececf0"/><path d="M13.2 1H15.1V13H13.2Z" fill="#e2e2e6"/><path d="M6.30 2.10L8.18 4.27L11.04 4.06L10.83 6.92L13.00 8.80L10.83 10.68L11.04 13.54L8.18 13.33L6.30 15.50L4.42 13.33L1.56 13.54L1.77 10.68L-0.40 8.80L1.77 6.92L1.56 4.06L4.42 4.27Z" fill="#f6a322" stroke="#f7b040" stroke-width=".8" stroke-linejoin="round"/><circle cx="6.3" cy="8.8" r="4.6" fill="url(#gS)"/></svg><span class="it"><span style="letter-spacing:-0.019px">Created</span></span></div>
<div class="c wi" style="left:638px;top:319px;width:140px"><svg class="ic" width="16" height="16" viewBox="0 0 16 16" style=""><circle cx="8" cy="8" r="7.6" fill="url(#gN)" stroke="#0e8512" stroke-width=".8"/><ellipse cx="7.600" cy="4.400" rx="4.200" ry="2.500" fill="#fff" opacity=".35"/></svg><span class="it"><span style="letter-spacing:-0.242px">Normal</span></span></div>
<div class="c" style="left:778px;top:319px;width:142px"><span style="letter-spacing:-0.209px">Employee 1</span></div>
<div class="c pr" style="left:920px;top:319px;width:152px"><span style="letter-spacing:-0.009px">Product 1</span></div>
<div class="c last" style="left:1072px;top:319px;width:201px"><span style="letter-spacing:-0.128px">Sales Department</span></div>
<div class="c nm" style="left:102px;top:338px;width:105px"><span style="letter-spacing:-0.171px">Phase 1.3</span></div>
<div class="c ctr" style="left:207px;top:338px;width:156px"><span style="letter-spacing:-0.008px">5/12/2011 2:10 PM</span></div>
<div class="c ctr" style="left:363px;top:338px;width:148px"><span style="letter-spacing:0.075px">5/21/2011 12:00 AM</span></div>
<div class="c" style="left:511px;top:338px;width:127px"></div>
<div class="c" style="left:638px;top:338px;width:140px"></div>
<div class="c" style="left:778px;top:338px;width:142px"></div>
<div class="c pr" style="left:920px;top:338px;width:152px"><span style="letter-spacing:-0.009px">Product 1</span></div>
<div class="c last" style="left:1072px;top:338px;width:201px"></div>
<div class="c nm" style="left:121px;top:357px;width:86px"><span style="letter-spacing:0.035px">Task 8</span></div>
<div class="c ctr" style="left:207px;top:357px;width:156px"></div>
<div class="c ctr" style="left:363px;top:357px;width:148px"></div>
<div class="c wi" style="left:511px;top:357px;width:127px"><svg class="ic" width="16" height="16" viewBox="0 0 16 16" style=""><path d="M6.2 .6H15.5V13.4H6.2Z" fill="#f8f8fa" stroke="#c6c6ce" stroke-width=".7"/><path d="M11 1H15.1V13H11Z" fill="#ececf0"/><path d="M13.2 1H15.1V13H13.2Z" fill="#e2e2e6"/><path d="M6.30 2.10L8.18 4.27L11.04 4.06L10.83 6.92L13.00 8.80L10.83 10.68L11.04 13.54L8.18 13.33L6.30 15.50L4.42 13.33L1.56 13.54L1.77 10.68L-0.40 8.80L1.77 6.92L1.56 4.06L4.42 4.27Z" fill="#f6a322" stroke="#f7b040" stroke-width=".8" stroke-linejoin="round"/><circle cx="6.3" cy="8.8" r="4.6" fill="url(#gS)"/></svg><span class="it"><span style="letter-spacing:-0.019px">Created</span></span></div>
<div class="c wi" style="left:638px;top:357px;width:140px"><svg class="ic" width="16" height="16" viewBox="0 0 16 16" style=""><circle cx="8" cy="8" r="7.6" fill="url(#gN)" stroke="#0e8512" stroke-width=".8"/><ellipse cx="7.600" cy="4.400" rx="4.200" ry="2.500" fill="#fff" opacity=".35"/></svg><span class="it"><span style="letter-spacing:-0.242px">Normal</span></span></div>
<div class="c" style="left:778px;top:357px;width:142px"><span style="letter-spacing:-0.209px">Employee 3</span></div>
<div class="c pr" style="left:920px;top:357px;width:152px"><span style="letter-spacing:-0.009px">Product 1</span></div>
<div class="c last" style="left:1072px;top:357px;width:201px"><span style="letter-spacing:-0.041px">Marketing Department</span></div>
<div class="c nm" style="left:121px;top:376px;width:86px"><span style="letter-spacing:0.035px">Task 9</span></div>
<div class="c ctr" style="left:207px;top:376px;width:156px"></div>
<div class="c ctr" style="left:363px;top:376px;width:148px"></div>
<div class="c wi" style="left:511px;top:376px;width:127px"><svg class="ic" width="16" height="16" viewBox="0 0 16 16" style=""><path d="M6.2 .6H15.5V13.4H6.2Z" fill="#f8f8fa" stroke="#c6c6ce" stroke-width=".7"/><path d="M11 1H15.1V13H11Z" fill="#ececf0"/><path d="M13.2 1H15.1V13H13.2Z" fill="#e2e2e6"/><path d="M6.30 2.10L8.18 4.27L11.04 4.06L10.83 6.92L13.00 8.80L10.83 10.68L11.04 13.54L8.18 13.33L6.30 15.50L4.42 13.33L1.56 13.54L1.77 10.68L-0.40 8.80L1.77 6.92L1.56 4.06L4.42 4.27Z" fill="#f6a322" stroke="#f7b040" stroke-width=".8" stroke-linejoin="round"/><circle cx="6.3" cy="8.8" r="4.6" fill="url(#gS)"/></svg><span class="it"><span style="letter-spacing:-0.019px">Created</span></span></div>
<div class="c wi" style="left:638px;top:376px;width:140px"><svg class="ic" width="16" height="16" viewBox="0 0 16 16" style=""><circle cx="8" cy="8" r="7.6" fill="url(#gN)" stroke="#0e8512" stroke-width=".8"/><ellipse cx="7.600" cy="4.400" rx="4.200" ry="2.500" fill="#fff" opacity=".35"/></svg><span class="it"><span style="letter-spacing:-0.242px">Normal</span></span></div>
<div class="c" style="left:778px;top:376px;width:142px"><span style="letter-spacing:-0.209px">Employee 1</span></div>
<div class="c pr" style="left:920px;top:376px;width:152px"><span style="letter-spacing:-0.009px">Product 1</span></div>
<div class="c last" style="left:1072px;top:376px;width:201px"><span style="letter-spacing:-0.128px">Sales Department</span></div>
<div class="c nm" style="left:121px;top:395px;width:86px"><span style="letter-spacing:0.013px">Task 10</span></div>
<div class="c ctr" style="left:207px;top:395px;width:156px"></div>
<div class="c ctr" style="left:363px;top:395px;width:148px"></div>
<div class="c wi" style="left:511px;top:395px;width:127px"><svg class="ic" width="16" height="16" viewBox="0 0 16 16" style=""><path d="M6.2 .6H15.5V13.4H6.2Z" fill="#f8f8fa" stroke="#c6c6ce" stroke-width=".7"/><path d="M11 1H15.1V13H11Z" fill="#ececf0"/><path d="M13.2 1H15.1V13H13.2Z" fill="#e2e2e6"/><path d="M6.30 2.10L8.18 4.27L11.04 4.06L10.83 6.92L13.00 8.80L10.83 10.68L11.04 13.54L8.18 13.33L6.30 15.50L4.42 13.33L1.56 13.54L1.77 10.68L-0.40 8.80L1.77 6.92L1.56 4.06L4.42 4.27Z" fill="#f6a322" stroke="#f7b040" stroke-width=".8" stroke-linejoin="round"/><circle cx="6.3" cy="8.8" r="4.6" fill="url(#gS)"/></svg><span class="it"><span style="letter-spacing:-0.019px">Created</span></span></div>
<div class="c wi" style="left:638px;top:395px;width:140px"><svg class="ic" width="16" height="16" viewBox="0 0 16 16" style=""><path d="M8 .7L15.3 8L8 15.3L.7 8Z" fill="url(#gU)" stroke="#ea860c" stroke-width="1" stroke-linejoin="round"/><path d="M6.900 3.400H9.100V9.300H6.900Z" fill="#241a10"/><path d="M6.900 10.300H9.100V12.500H6.900Z" fill="#241a10"/></svg><span class="it"><span style="letter-spacing:-0.003px">Urgent</span></span></div>
<div class="c" style="left:778px;top:395px;width:142px"><span style="letter-spacing:-0.209px">Employee 3</span></div>
<div class="c pr" style="left:920px;top:395px;width:152px"><span style="letter-spacing:-0.009px">Product 2</span></div>
<div class="c last" style="left:1072px;top:395px;width:201px"><span style="letter-spacing:-0.041px">Marketing Department</span></div>
<div class="c nm" style="left:121px;top:414px;width:86px"><span style="letter-spacing:0.035px">Task 5</span></div>
<div class="c ctr" style="left:207px;top:414px;width:156px"><span style="letter-spacing:-0.008px">5/12/2011 2:10 PM</span></div>
<div class="c ctr" style="left:363px;top:414px;width:148px"><span style="letter-spacing:0.075px">5/21/2011 12:00 AM</span></div>
<div class="c wi" style="left:511px;top:414px;width:127px"><svg class="ic" width="16" height="16" viewBox="0 0 16 16" style=""><path d="M6.2 .6H15.5V13.4H6.2Z" fill="#f8f8fa" stroke="#c6c6ce" stroke-width=".7"/><path d="M11 1H15.1V13H11Z" fill="#ececf0"/><path d="M13.2 1H15.1V13H13.2Z" fill="#e2e2e6"/><path d="M6.30 2.10L8.18 4.27L11.04 4.06L10.83 6.92L13.00 8.80L10.83 10.68L11.04 13.54L8.18 13.33L6.30 15.50L4.42 13.33L1.56 13.54L1.77 10.68L-0.40 8.80L1.77 6.92L1.56 4.06L4.42 4.27Z" fill="#f6a322" stroke="#f7b040" stroke-width=".8" stroke-linejoin="round"/><circle cx="6.3" cy="8.8" r="4.6" fill="url(#gS)"/></svg><span class="it"><span style="letter-spacing:-0.019px">Created</span></span></div>
<div class="c wi" style="left:638px;top:414px;width:140px"><svg class="ic" width="16" height="16" viewBox="0 0 16 16" style=""><path d="M8 .7L15.3 8L8 15.3L.7 8Z" fill="url(#gU)" stroke="#ea860c" stroke-width="1" stroke-linejoin="round"/><path d="M6.900 3.400H9.100V9.300H6.900Z" fill="#241a10"/><path d="M6.900 10.300H9.100V12.500H6.900Z" fill="#241a10"/></svg><span class="it"><span style="letter-spacing:-0.003px">Urgent</span></span></div>
<div class="c" style="left:778px;top:414px;width:142px"><span style="letter-spacing:-0.209px">Employee 2</span></div>
<div class="c pr" style="left:920px;top:414px;width:152px"><span style="letter-spacing:-0.009px">Product 2</span></div>
<div class="c last" style="left:1072px;top:414px;width:201px"><span style="letter-spacing:-0.053px">Production Department</span></div>
<div class="c nm" style="left:83px;top:433px;width:124px"><span style="letter-spacing:0.066px">Project 2</span></div>
<div class="c ctr" style="left:207px;top:433px;width:156px"><span style="letter-spacing:0.086px">5/5/2011 12:00 AM</span></div>
<div class="c ctr" style="left:363px;top:433px;width:148px"><span style="letter-spacing:0.075px">5/27/2011 12:00 AM</span></div>
<div class="c" style="left:511px;top:433px;width:127px"></div>
<div class="c" style="left:638px;top:433px;width:140px"></div>
<div class="c" style="left:778px;top:433px;width:142px"></div>
<div class="c pr" style="left:920px;top:433px;width:152px"><span style="letter-spacing:-0.009px">Product 1</span></div>
<div class="c last" style="left:1072px;top:433px;width:201px"></div>
<div class="c nm" style="left:102px;top:452px;width:105px"><span style="letter-spacing:-0.171px">Phase 2.1</span></div>
<div class="c ctr" style="left:207px;top:452px;width:156px"><span style="letter-spacing:0.075px">5/18/2011 12:00 AM</span></div>
<div class="c ctr" style="left:363px;top:452px;width:148px"><span style="letter-spacing:0.075px">5/27/2011 12:00 AM</span></div>
<div class="c" style="left:511px;top:452px;width:127px"></div>
<div class="c" style="left:638px;top:452px;width:140px"></div>
<div class="c" style="left:778px;top:452px;width:142px"></div>
<div class="c pr" style="left:920px;top:452px;width:152px"><span style="letter-spacing:-0.009px">Product 1</span></div>
<div class="c last" style="left:1072px;top:452px;width:201px"></div>
<div class="c nm" style="left:121px;top:471px;width:86px"><span style="letter-spacing:0.130px">Task 11</span></div>
<div class="c ctr" style="left:207px;top:471px;width:156px"></div>
<div class="c ctr" style="left:363px;top:471px;width:148px"></div>
<div class="c wi" style="left:511px;top:471px;width:127px"><svg class="ic" width="16" height="16" viewBox="0 0 16 16" style=""><path d="M6.2 .6H15.5V13.4H6.2Z" fill="#f8f8fa" stroke="#c6c6ce" stroke-width=".7"/><path d="M11 1H15.1V13H11Z" fill="#ececf0"/><path d="M13.2 1H15.1V13H13.2Z" fill="#e2e2e6"/><path d="M6.30 2.10L8.18 4.27L11.04 4.06L10.83 6.92L13.00 8.80L10.83 10.68L11.04 13.54L8.18 13.33L6.30 15.50L4.42 13.33L1.56 13.54L1.77 10.68L-0.40 8.80L1.77 6.92L1.56 4.06L4.42 4.27Z" fill="#f6a322" stroke="#f7b040" stroke-width=".8" stroke-linejoin="round"/><circle cx="6.3" cy="8.8" r="4.6" fill="url(#gS)"/></svg><span class="it"><span style="letter-spacing:-0.019px">Created</span></span></div>
<div class="c wi" style="left:638px;top:471px;width:140px"><svg class="ic" width="16" height="16" viewBox="0 0 16 16" style=""><rect x=".6" y=".6" width="14.8" height="14.8" rx="2" fill="url(#gB)" stroke="#1a56ae" stroke-width="1"/><path d="M4.4 4.2L8 7.6L11.6 4.2M4.4 8.4L8 11.8L11.6 8.4" fill="none" stroke="#fff" stroke-width="1.8"/></svg><span class="it"><span style="letter-spacing:-0.142px">Lowest</span></span></div>
<div class="c" style="left:778px;top:471px;width:142px"><span style="letter-spacing:-0.209px">Employee 1</span></div>
<div class="c pr" style="left:920px;top:471px;width:152px"><span style="letter-spacing:-0.009px">Product 2</span></div>
<div class="c last" style="left:1072px;top:471px;width:201px"><span style="letter-spacing:-0.128px">Sales Department</span></div>
<div class="c nm" style="left:121px;top:490px;width:86px"><span style="letter-spacing:0.013px">Task 12</span></div>
<div class="c ctr" style="left:207px;top:490px;width:156px"></div>
<div class="c ctr" style="left:363px;top:490px;width:148px"></div>
<div class="c wi" style="left:511px;top:490px;width:127px"><svg class="ic" width="16" height="16" viewBox="0 0 16 16" style=""><path d="M6.2 .6H15.5V13.4H6.2Z" fill="#f8f8fa" stroke="#c6c6ce" stroke-width=".7"/><path d="M11 1H15.1V13H11Z" fill="#ececf0"/><path d="M13.2 1H15.1V13H13.2Z" fill="#e2e2e6"/><path d="M6.30 2.10L8.18 4.27L11.04 4.06L10.83 6.92L13.00 8.80L10.83 10.68L11.04 13.54L8.18 13.33L6.30 15.50L4.42 13.33L1.56 13.54L1.77 10.68L-0.40 8.80L1.77 6.92L1.56 4.06L4.42 4.27Z" fill="#f6a322" stroke="#f7b040" stroke-width=".8" stroke-linejoin="round"/><circle cx="6.3" cy="8.8" r="4.6" fill="url(#gS)"/></svg><span class="it"><span style="letter-spacing:-0.019px">Created</span></span></div>
<div class="c wi" style="left:638px;top:490px;width:140px"><svg class="ic" width="16" height="16" viewBox="0 0 16 16" style=""><circle cx="8" cy="8" r="7.6" fill="url(#gN)" stroke="#0e8512" stroke-width=".8"/><ellipse cx="7.600" cy="4.400" rx="4.200" ry="2.500" fill="#fff" opacity=".35"/></svg><span class="it"><span style="letter-spacing:-0.242px">Normal</span></span></div>
<div class="c" style="left:778px;top:490px;width:142px"><span style="letter-spacing:-0.209px">Employee 2</span></div>
<div class="c pr" style="left:920px;top:490px;width:152px"><span style="letter-spacing:-0.009px">Product 1</span></div>
<div class="c last" style="left:1072px;top:490px;width:201px"><span style="letter-spacing:-0.053px">Production Department</span></div>
<div class="c nm" style="left:121px;top:509px;width:86px"><span style="letter-spacing:0.013px">Task 13</span></div>
<div class="c ctr" style="left:207px;top:509px;width:156px"><span style="letter-spacing:0.209px">5/18/2011</span></div>
<div class="c ctr" style="left:363px;top:509px;width:148px"><span style="letter-spacing:0.209px">5/27/2011</span></div>
<div class="c wi" style="left:511px;top:509px;width:127px"><svg class="ic" width="16" height="16" viewBox="0 0 16 16" style=""><path d="M6.2 .6H15.5V13.4H6.2Z" fill="#f8f8fa" stroke="#c6c6ce" stroke-width=".7"/><path d="M11 1H15.1V13H11Z" fill="#ececf0"/><path d="M13.2 1H15.1V13H13.2Z" fill="#e2e2e6"/><path d="M6.30 2.10L8.18 4.27L11.04 4.06L10.83 6.92L13.00 8.80L10.83 10.68L11.04 13.54L8.18 13.33L6.30 15.50L4.42 13.33L1.56 13.54L1.77 10.68L-0.40 8.80L1.77 6.92L1.56 4.06L4.42 4.27Z" fill="#f6a322" stroke="#f7b040" stroke-width=".8" stroke-linejoin="round"/><circle cx="6.3" cy="8.8" r="4.6" fill="url(#gS)"/></svg><span class="it"><span style="letter-spacing:-0.019px">Created</span></span></div>
<div class="c wi" style="left:638px;top:509px;width:140px"><svg class="ic" width="16" height="16" viewBox="0 0 16 16" style=""><rect x=".6" y=".6" width="14.8" height="14.8" rx="2" fill="url(#gB)" stroke="#1a56ae" stroke-width="1"/><path d="M4.4 4.2L8 7.6L11.6 4.2M4.4 8.4L8 11.8L11.6 8.4" fill="none" stroke="#fff" stroke-width="1.8"/></svg><span class="it"><span style="letter-spacing:-0.142px">Lowest</span></span></div>
<div class="c" style="left:778px;top:509px;width:142px"><span style="letter-spacing:-0.209px">Employee 3</span></div>
<div class="c pr" style="left:920px;top:509px;width:152px"><span style="letter-spacing:-0.009px">Product 3</span></div>
<div class="c last" style="left:1072px;top:509px;width:201px"><span style="letter-spacing:-0.041px">Marketing Department</span></div>
<div class="c nm" style="left:102px;top:528px;width:105px"><span style="letter-spacing:-0.171px">Phase 2.2</span></div>
<div class="c ctr" style="left:207px;top:528px;width:156px"><span style="letter-spacing:0.086px">5/5/2011 12:00 AM</span></div>
<div class="c ctr" style="left:363px;top:528px;width:148px"><span style="letter-spacing:-0.008px">5/12/2011 3:41 PM</span></div>
<div class="c" style="left:511px;top:528px;width:127px"></div>
<div class="c" style="left:638px;top:528px;width:140px"></div>
<div class="c" style="left:778px;top:528px;width:142px"></div>
<div class="c pr" style="left:920px;top:528px;width:152px"><span style="letter-spacing:-0.009px">Product 1</span></div>
<div class="c last" style="left:1072px;top:528px;width:201px"></div>
<div class="c nm" style="left:121px;top:547px;width:86px"><span style="letter-spacing:0.013px">Task 14</span></div>
<div class="c ctr" style="left:207px;top:547px;width:156px"><span style="letter-spacing:0.086px">5/5/2011 12:00 AM</span></div>
<div class="c ctr" style="left:363px;top:547px;width:148px"><span style="letter-spacing:-0.008px">5/12/2011 3:41 PM</span></div>
<div class="c wi" style="left:511px;top:547px;width:127px"><svg class="ic" width="16" height="16" viewBox="0 0 16 16" style=""><path d="M6.2 .6H15.5V13.4H6.2Z" fill="#f8f8fa" stroke="#c6c6ce" stroke-width=".7"/><path d="M11 1H15.1V13H11Z" fill="#ececf0"/><path d="M13.2 1H15.1V13H13.2Z" fill="#e2e2e6"/><path d="M.5 7.300L9 11.500L.5 15.700Z" fill="#4a78ec" stroke="#2f50c8" stroke-width=".9" stroke-linejoin="round"/><path d="M1.600 9.200L6.300 11.500L1.600 13.800Z" fill="#8db4fa"/></svg><span class="it"><span style="letter-spacing:-0.113px">In Progress</span></span></div>
<div class="c wi" style="left:638px;top:547px;width:140px"><svg class="ic" width="16" height="16" viewBox="0 0 16 16" style=""><path d="M8 .7L15.3 8L8 15.3L.7 8Z" fill="url(#gU)" stroke="#ea860c" stroke-width="1" stroke-linejoin="round"/><path d="M6.900 3.400H9.100V9.300H6.900Z" fill="#241a10"/><path d="M6.900 10.300H9.100V12.500H6.900Z" fill="#241a10"/></svg><span class="it"><span style="letter-spacing:-0.003px">Urgent</span></span></div>
<div class="c" style="left:778px;top:547px;width:142px"><span style="letter-spacing:-0.209px">Employee 3</span></div>
<div class="c pr" style="left:920px;top:547px;width:152px"><span style="letter-spacing:-0.009px">Product 2</span></div>
<div class="c last" style="left:1072px;top:547px;width:201px"><span style="letter-spacing:-0.041px">Marketing Department</span></div>
<div class="c nm" style="left:121px;top:566px;width:86px"><span style="letter-spacing:0.013px">Task 15</span></div>
<div class="c ctr" style="left:207px;top:566px;width:156px"><span style="letter-spacing:0.086px">5/5/2011 12:00 AM</span></div>
<div class="c ctr" style="left:363px;top:566px;width:148px"><span style="letter-spacing:0.086px">5/12/2011 9:00 AM</span></div>
<div class="c wi" style="left:511px;top:566px;width:127px"><svg class="ic" width="16" height="16" viewBox="0 0 16 16" style=""><path d="M6.2 .6H15.5V13.4H6.2Z" fill="#f8f8fa" stroke="#c6c6ce" stroke-width=".7"/><path d="M11 1H15.1V13H11Z" fill="#ececf0"/><path d="M13.2 1H15.1V13H13.2Z" fill="#e2e2e6"/><path d="M6.30 2.10L8.18 4.27L11.04 4.06L10.83 6.92L13.00 8.80L10.83 10.68L11.04 13.54L8.18 13.33L6.30 15.50L4.42 13.33L1.56 13.54L1.77 10.68L-0.40 8.80L1.77 6.92L1.56 4.06L4.42 4.27Z" fill="#f6a322" stroke="#f7b040" stroke-width=".8" stroke-linejoin="round"/><circle cx="6.3" cy="8.8" r="4.6" fill="url(#gS)"/></svg><span class="it"><span style="letter-spacing:-0.019px">Created</span></span></div>
<div class="c wi" style="left:638px;top:566px;width:140px"><svg class="ic" width="16" height="16" viewBox="0 0 16 16" style=""><rect x=".6" y=".6" width="14.8" height="14.8" rx="2" fill="url(#gB)" stroke="#1a56ae" stroke-width="1"/><path d="M4.4 6.4L8 10L11.6 6.4" fill="none" stroke="#fff" stroke-width="1.9"/></svg><span class="it"><span style="letter-spacing:-0.393px">Low</span></span></div>
<div class="c" style="left:778px;top:566px;width:142px"><span style="letter-spacing:-0.209px">Employee 2</span></div>
<div class="c pr" style="left:920px;top:566px;width:152px"><span style="letter-spacing:-0.009px">Product 1</span></div>
<div class="c last" style="left:1072px;top:566px;width:201px"><span style="letter-spacing:-0.053px">Production Department</span></div>
<div class="c nm" style="left:121px;top:585px;width:86px"><span style="letter-spacing:0.013px">Task 16</span></div>
<div class="c ctr" style="left:207px;top:585px;width:156px"></div>
<div class="c ctr" style="left:363px;top:585px;width:148px"></div>
<div class="c wi" style="left:511px;top:585px;width:127px"><svg class="ic" width="16" height="16" viewBox="0 0 16 16" style=""><path d="M6.2 .6H15.5V13.4H6.2Z" fill="#f8f8fa" stroke="#c6c6ce" stroke-width=".7"/><path d="M11 1H15.1V13H11Z" fill="#ececf0"/><path d="M13.2 1H15.1V13H13.2Z" fill="#e2e2e6"/><path d="M.5 7.300L9 11.500L.5 15.700Z" fill="#4a78ec" stroke="#2f50c8" stroke-width=".9" stroke-linejoin="round"/><path d="M1.600 9.200L6.300 11.500L1.600 13.800Z" fill="#8db4fa"/></svg><span class="it"><span style="letter-spacing:-0.113px">In Progress</span></span></div>
<div class="c wi" style="left:638px;top:585px;width:140px"><svg class="ic" width="16" height="16" viewBox="0 0 16 16" style=""><rect x=".6" y=".6" width="14.8" height="14.8" rx="2" fill="url(#gR)" stroke="#aa1020" stroke-width="1"/><path d="M4.4 9.6L8 6L11.6 9.6" fill="none" stroke="#fff" stroke-width="1.9"/></svg><span class="it"><span style="letter-spacing:-0.406px">High</span></span></div>
<div class="c" style="left:778px;top:585px;width:142px"><span style="letter-spacing:-0.209px">Employee 1</span></div>
<div class="c pr" style="left:920px;top:585px;width:152px"><span style="letter-spacing:-0.009px">Product 2</span></div>
<div class="c last" style="left:1072px;top:585px;width:201px"><span style="letter-spacing:-0.128px">Sales Department</span></div>
<div class="c nm" style="left:102px;top:604px;width:105px"><span style="letter-spacing:-0.171px">Phase 2.3</span></div>
<div class="c ctr" style="left:207px;top:604px;width:156px"></div>
<div class="c ctr" style="left:363px;top:604px;width:148px"></div>
<div class="c" style="left:511px;top:604px;width:127px"></div>
<div class="c" style="left:638px;top:604px;width:140px"></div>
<div class="c" style="left:778px;top:604px;width:142px"></div>
<div class="c pr" style="left:920px;top:604px;width:152px"><span style="letter-spacing:-0.009px">Product 1</span></div>
<div class="c last" style="left:1072px;top:604px;width:201px"></div>
<div class="c nm" style="left:121px;top:623px;width:86px"><span style="letter-spacing:0.013px">Task 17</span></div>
<div class="c ctr" style="left:207px;top:623px;width:156px"></div>
<div class="c ctr" style="left:363px;top:623px;width:148px"></div>
<div class="c wi" style="left:511px;top:623px;width:127px"><svg class="ic" width="16" height="16" viewBox="0 0 16 16" style=""><path d="M6.2 .6H15.5V13.4H6.2Z" fill="#f8f8fa" stroke="#c6c6ce" stroke-width=".7"/><path d="M11 1H15.1V13H11Z" fill="#ececf0"/><path d="M13.2 1H15.1V13H13.2Z" fill="#e2e2e6"/><path d="M.2 11.200L2.800 10.100L6.200 12.900L11.300 8.600L12.800 8.900L6.600 16L5.400 16Z" fill="#3aa624" stroke="#2c8c1c" stroke-width=".5"/></svg><span class="it"><span style="letter-spacing:-0.133px">Completed</span></span></div>
<div class="c wi" style="left:638px;top:623px;width:140px"><svg class="ic" width="16" height="16" viewBox="0 0 16 16" style=""><circle cx="8" cy="8" r="7.6" fill="url(#gN)" stroke="#0e8512" stroke-width=".8"/><ellipse cx="7.600" cy="4.400" rx="4.200" ry="2.500" fill="#fff" opacity=".35"/></svg><span class="it"><span style="letter-spacing:-0.242px">Normal</span></span></div>
<div class="c" style="left:778px;top:623px;width:142px"><span style="letter-spacing:-0.209px">Employee 3</span></div>
<div class="c pr" style="left:920px;top:623px;width:152px"><span style="letter-spacing:-0.009px">Product 1</span></div>
<div class="c last" style="left:1072px;top:623px;width:201px"><span style="letter-spacing:-0.041px">Marketing Department</span></div>
<div class="c nm" style="left:121px;top:642px;width:86px"><span style="letter-spacing:0.013px">Task 18</span></div>
<div class="c ctr" style="left:207px;top:642px;width:156px"></div>
<div class="c ctr" style="left:363px;top:642px;width:148px"></div>
<div class="c wi" style="left:511px;top:642px;width:127px"><svg class="ic" width="16" height="16" viewBox="0 0 16 16" style=""><path d="M6.2 .6H15.5V13.4H6.2Z" fill="#f8f8fa" stroke="#c6c6ce" stroke-width=".7"/><path d="M11 1H15.1V13H11Z" fill="#ececf0"/><path d="M13.2 1H15.1V13H13.2Z" fill="#e2e2e6"/><path d="M6.30 2.10L8.18 4.27L11.04 4.06L10.83 6.92L13.00 8.80L10.83 10.68L11.04 13.54L8.18 13.33L6.30 15.50L4.42 13.33L1.56 13.54L1.77 10.68L-0.40 8.80L1.77 6.92L1.56 4.06L4.42 4.27Z" fill="#f6a322" stroke="#f7b040" stroke-width=".8" stroke-linejoin="round"/><circle cx="6.3" cy="8.8" r="4.6" fill="url(#gS)"/></svg><span class="it"><span style="letter-spacing:-0.019px">Created</span></span></div>
<div class="c wi" style="left:638px;top:642px;width:140px"><svg class="ic" width="16" height="16" viewBox="0 0 16 16" style=""><rect x=".6" y=".6" width="14.8" height="14.8" rx="2" fill="url(#gR)" stroke="#aa1020" stroke-width="1"/><path d="M4.4 7.6L8 4.2L11.6 7.6M4.4 11.8L8 8.4L11.6 11.8" fill="none" stroke="#fff" stroke-width="1.8"/></svg><span class="it"><span style="letter-spacing:-0.185px">Highest</span></span></div>
<div class="c" style="left:778px;top:642px;width:142px"><span style="letter-spacing:-0.209px">Employee 2</span></div>
<div class="c pr" style="left:920px;top:642px;width:152px"><span style="letter-spacing:-0.009px">Product 3</span></div>
<div class="c last" style="left:1072px;top:642px;width:201px"><span style="letter-spacing:-0.053px">Production Department</span></div>
<div class="c nm" style="left:121px;top:661px;width:86px"><span style="letter-spacing:0.013px">Task 19</span></div>
<div class="c ctr" style="left:207px;top:661px;width:156px"></div>
<div class="c ctr" style="left:363px;top:661px;width:148px"></div>
<div class="c wi" style="left:511px;top:661px;width:127px"><svg class="ic" width="16" height="16" viewBox="0 0 16 16" style=""><path d="M6.2 .6H15.5V13.4H6.2Z" fill="#f8f8fa" stroke="#c6c6ce" stroke-width=".7"/><path d="M11 1H15.1V13H11Z" fill="#ececf0"/><path d="M13.2 1H15.1V13H13.2Z" fill="#e2e2e6"/><path d="M.5 7.300L9 11.500L.5 15.700Z" fill="#4a78ec" stroke="#2f50c8" stroke-width=".9" stroke-linejoin="round"/><path d="M1.600 9.200L6.300 11.500L1.600 13.800Z" fill="#8db4fa"/></svg><span class="it"><span style="letter-spacing:-0.113px">In Progress</span></span></div>
<div class="c wi" style="left:638px;top:661px;width:140px"><svg class="ic" width="16" height="16" viewBox="0 0 16 16" style=""><path d="M8 .7L15.3 8L8 15.3L.7 8Z" fill="url(#gU)" stroke="#ea860c" stroke-width="1" stroke-linejoin="round"/><path d="M6.900 3.400H9.100V9.300H6.900Z" fill="#241a10"/><path d="M6.900 10.300H9.100V12.500H6.900Z" fill="#241a10"/></svg><span class="it"><span style="letter-spacing:-0.003px">Urgent</span></span></div>
<div class="c" style="left:778px;top:661px;width:142px"><span style="letter-spacing:-0.209px">Employee 2</span></div>
<div class="c pr" style="left:920px;top:661px;width:152px"><span style="letter-spacing:-0.009px">Product 2</span></div>
<div class="c last" style="left:1072px;top:661px;width:201px"><span style="letter-spacing:-0.053px">Production Department</span></div>
<div class="c nm" style="left:83px;top:680px;width:124px"><span style="letter-spacing:0.066px">Project 3</span></div>
<div class="c ctr" style="left:207px;top:680px;width:156px"></div>
<div class="c ctr" style="left:363px;top:680px;width:148px"></div>
<div class="c" style="left:511px;top:680px;width:127px"></div>
<div class="c" style="left:638px;top:680px;width:140px"></div>
<div class="c" style="left:778px;top:680px;width:142px"></div>
<div class="c pr" style="left:920px;top:680px;width:152px"><span style="letter-spacing:-0.009px">Product 1</span></div>
<div class="c last" style="left:1072px;top:680px;width:201px"></div>
<div class="c nm" style="left:102px;top:699px;width:105px"><span style="letter-spacing:-0.171px">Phase 3.1</span></div>
<div class="c ctr" style="left:207px;top:699px;width:156px"></div>
<div class="c ctr" style="left:363px;top:699px;width:148px"></div>
<div class="c" style="left:511px;top:699px;width:127px"></div>
<div class="c" style="left:638px;top:699px;width:140px"></div>
<div class="c" style="left:778px;top:699px;width:142px"></div>
<div class="c pr" style="left:920px;top:699px;width:152px"><span style="letter-spacing:-0.009px">Product 2</span></div>
<div class="c last" style="left:1072px;top:699px;width:201px"></div>
<div class="c nm" style="left:121px;top:718px;width:86px"><span style="letter-spacing:0.013px">Task 20</span></div>
<div class="c ctr" style="left:207px;top:718px;width:156px"></div>
<div class="c ctr" style="left:363px;top:718px;width:148px"></div>
<div class="c wi" style="left:511px;top:718px;width:127px"><svg class="ic" width="16" height="16" viewBox="0 0 16 16" style=""><path d="M6.2 .6H15.5V13.4H6.2Z" fill="#f8f8fa" stroke="#c6c6ce" stroke-width=".7"/><path d="M11 1H15.1V13H11Z" fill="#ececf0"/><path d="M13.2 1H15.1V13H13.2Z" fill="#e2e2e6"/><path d="M.5 7.300L9 11.500L.5 15.700Z" fill="#4a78ec" stroke="#2f50c8" stroke-width=".9" stroke-linejoin="round"/><path d="M1.600 9.200L6.300 11.500L1.600 13.800Z" fill="#8db4fa"/></svg><span class="it"><span style="letter-spacing:-0.113px">In Progress</span></span></div>
<div class="c wi" style="left:638px;top:718px;width:140px"><svg class="ic" width="16" height="16" viewBox="0 0 16 16" style=""><rect x=".6" y=".6" width="14.8" height="14.8" rx="2" fill="url(#gR)" stroke="#aa1020" stroke-width="1"/><path d="M4.4 9.6L8 6L11.6 9.6" fill="none" stroke="#fff" stroke-width="1.9"/></svg><span class="it"><span style="letter-spacing:-0.406px">High</span></span></div>
<div class="c" style="left:778px;top:718px;width:142px"><span style="letter-spacing:-0.209px">Employee 1</span></div>
<div class="c pr" style="left:920px;top:718px;width:152px"><span style="letter-spacing:-0.009px">Product 3</span></div>
<div class="c last" style="left:1072px;top:718px;width:201px"><span style="letter-spacing:-0.128px">Sales Department</span></div>
<div class="c nm" style="left:121px;top:737px;width:86px"><span style="letter-spacing:0.013px">Task 21</span></div>
<div class="c ctr" style="left:207px;top:737px;width:156px"></div>
<div class="c ctr" style="left:363px;top:737px;width:148px"></div>
<div class="c wi" style="left:511px;top:737px;width:127px"><svg class="ic" width="16" height="16" viewBox="0 0 16 16" style=""><path d="M6.2 .6H15.5V13.4H6.2Z" fill="#f8f8fa" stroke="#c6c6ce" stroke-width=".7"/><path d="M11 1H15.1V13H11Z" fill="#ececf0"/><path d="M13.2 1H15.1V13H13.2Z" fill="#e2e2e6"/><path d="M.2 11.200L2.800 10.100L6.200 12.900L11.300 8.600L12.800 8.900L6.600 16L5.400 16Z" fill="#3aa624" stroke="#2c8c1c" stroke-width=".5"/></svg><span class="it"><span style="letter-spacing:-0.133px">Completed</span></span></div>
<div class="c wi" style="left:638px;top:737px;width:140px"><svg class="ic" width="16" height="16" viewBox="0 0 16 16" style=""><rect x=".6" y=".6" width="14.8" height="14.8" rx="2" fill="url(#gB)" stroke="#1a56ae" stroke-width="1"/><path d="M4.4 6.4L8 10L11.6 6.4" fill="none" stroke="#fff" stroke-width="1.9"/></svg><span class="it"><span style="letter-spacing:-0.393px">Low</span></span></div>
<div class="c" style="left:778px;top:737px;width:142px"><span style="letter-spacing:-0.209px">Employee 2</span></div>
<div class="c pr" style="left:920px;top:737px;width:152px"><span style="letter-spacing:-0.009px">Product 2</span></div>
<div class="c last" style="left:1072px;top:737px;width:201px"><span style="letter-spacing:-0.053px">Production Department</span></div>
<div class="c nm" style="left:121px;top:756px;width:86px"><span style="letter-spacing:0.013px">Task 22</span></div>
<div class="c ctr" style="left:207px;top:756px;width:156px"></div>
<div class="c ctr" style="left:363px;top:756px;width:148px"></div>
<div class="c wi" style="left:511px;top:756px;width:127px"><svg class="ic" width="16" height="16" viewBox="0 0 16 16" style=""><path d="M6.2 .6H15.5V13.4H6.2Z" fill="#f8f8fa" stroke="#c6c6ce" stroke-width=".7"/><path d="M11 1H15.1V13H11Z" fill="#ececf0"/><path d="M13.2 1H15.1V13H13.2Z" fill="#e2e2e6"/><path d="M.5 7.300L9 11.500L.5 15.700Z" fill="#4a78ec" stroke="#2f50c8" stroke-width=".9" stroke-linejoin="round"/><path d="M1.600 9.200L6.300 11.500L1.600 13.800Z" fill="#8db4fa"/></svg><span class="it"><span style="letter-spacing:-0.113px">In Progress</span></span></div>
<div class="c wi" style="left:638px;top:756px;width:140px"><svg class="ic" width="16" height="16" viewBox="0 0 16 16" style=""><circle cx="8" cy="8" r="7.6" fill="url(#gN)" stroke="#0e8512" stroke-width=".8"/><ellipse cx="7.600" cy="4.400" rx="4.200" ry="2.500" fill="#fff" opacity=".35"/></svg><span class="it"><span style="letter-spacing:-0.242px">Normal</span></span></div>
<div class="c" style="left:778px;top:756px;width:142px"><span style="letter-spacing:-0.209px">Employee 3</span></div>
<div class="c pr" style="left:920px;top:756px;width:152px"><span style="letter-spacing:-0.009px">Product 3</span></div>
<div class="c last" style="left:1072px;top:756px;width:201px"><span style="letter-spacing:-0.041px">Marketing Department</span></div>
<div class="c nm" style="left:102px;top:775px;width:105px"><span style="letter-spacing:-0.171px">Phase 3.2</span></div>
<div class="c ctr" style="left:207px;top:775px;width:156px"></div>
<div class="c ctr" style="left:363px;top:775px;width:148px"></div>
<div class="c" style="left:511px;top:775px;width:127px"></div>
<div class="c" style="left:638px;top:775px;width:140px"></div>
<div class="c" style="left:778px;top:775px;width:142px"></div>
<div class="c pr" style="left:920px;top:775px;width:152px"><span style="letter-spacing:-0.009px">Product 1</span></div>
<div class="c last" style="left:1072px;top:775px;width:201px"></div>
<div class="c nm" style="left:121px;top:794px;width:86px"><span style="letter-spacing:0.013px">Task 23</span></div>
<div class="c ctr" style="left:207px;top:794px;width:156px"></div>
<div class="c ctr" style="left:363px;top:794px;width:148px"></div>
<div class="c wi" style="left:511px;top:794px;width:127px"><svg class="ic" width="16" height="16" viewBox="0 0 16 16" style=""><path d="M6.2 .6H15.5V13.4H6.2Z" fill="#f8f8fa" stroke="#c6c6ce" stroke-width=".7"/><path d="M11 1H15.1V13H11Z" fill="#ececf0"/><path d="M13.2 1H15.1V13H13.2Z" fill="#e2e2e6"/><path d="M6.30 2.10L8.18 4.27L11.04 4.06L10.83 6.92L13.00 8.80L10.83 10.68L11.04 13.54L8.18 13.33L6.30 15.50L4.42 13.33L1.56 13.54L1.77 10.68L-0.40 8.80L1.77 6.92L1.56 4.06L4.42 4.27Z" fill="#f6a322" stroke="#f7b040" stroke-width=".8" stroke-linejoin="round"/><circle cx="6.3" cy="8.8" r="4.6" fill="url(#gS)"/></svg><span class="it"><span style="letter-spacing:-0.019px">Created</span></span></div>
<div class="c wi" style="left:638px;top:794px;width:140px"><svg class="ic" width="16" height="16" viewBox="0 0 16 16" style=""><rect x=".6" y=".6" width="14.8" height="14.8" rx="2" fill="url(#gR)" stroke="#aa1020" stroke-width="1"/><path d="M4.4 7.6L8 4.2L11.6 7.6M4.4 11.8L8 8.4L11.6 11.8" fill="none" stroke="#fff" stroke-width="1.8"/></svg><span class="it"><span style="letter-spacing:-0.185px">Highest</span></span></div>
<div class="c" style="left:778px;top:794px;width:142px"><span style="letter-spacing:-0.209px">Employee 1</span></div>
<div class="c pr" style="left:920px;top:794px;width:152px"><span style="letter-spacing:-0.009px">Product 1</span></div>
<div class="c last" style="left:1072px;top:794px;width:201px"><span style="letter-spacing:-0.128px">Sales Department</span></div>
<div class="c nm" style="left:121px;top:813px;width:86px"><span style="letter-spacing:0.013px">Task 24</span></div>
<div class="c ctr" style="left:207px;top:813px;width:156px"></div>
<div class="c ctr" style="left:363px;top:813px;width:148px"></div>
<div class="c wi" style="left:511px;top:813px;width:127px"><svg class="ic" width="16" height="16" viewBox="0 0 16 16" style=""><path d="M6.2 .6H15.5V13.4H6.2Z" fill="#f8f8fa" stroke="#c6c6ce" stroke-width=".7"/><path d="M11 1H15.1V13H11Z" fill="#ececf0"/><path d="M13.2 1H15.1V13H13.2Z" fill="#e2e2e6"/><path d="M.2 11.200L2.800 10.100L6.200 12.900L11.300 8.600L12.800 8.900L6.600 16L5.400 16Z" fill="#3aa624" stroke="#2c8c1c" stroke-width=".5"/></svg><span class="it"><span style="letter-spacing:-0.133px">Completed</span></span></div>
<div class="c wi" style="left:638px;top:813px;width:140px"><svg class="ic" width="16" height="16" viewBox="0 0 16 16" style=""><circle cx="8" cy="8" r="7.6" fill="url(#gN)" stroke="#0e8512" stroke-width=".8"/><ellipse cx="7.600" cy="4.400" rx="4.200" ry="2.500" fill="#fff" opacity=".35"/></svg><span class="it"><span style="letter-spacing:-0.242px">Normal</span></span></div>
<div class="c" style="left:778px;top:813px;width:142px"><span style="letter-spacing:-0.209px">Employee 2</span></div>
<div class="c pr" style="left:920px;top:813px;width:152px"><span style="letter-spacing:-0.009px">Product 1</span></div>
<div class="c last" style="left:1072px;top:813px;width:201px"><span style="letter-spacing:-0.053px">Production Department</span></div>
<div class="c nm" style="left:121px;top:832px;width:86px"><span style="letter-spacing:0.013px">Task 25</span></div>
<div class="c ctr" style="left:207px;top:832px;width:156px"></div>
<div class="c ctr" style="left:363px;top:832px;width:148px"></div>
<div class="c wi" style="left:511px;top:832px;width:127px"><svg class="ic" width="16" height="16" viewBox="0 0 16 16" style=""><path d="M6.2 .6H15.5V13.4H6.2Z" fill="#f8f8fa" stroke="#c6c6ce" stroke-width=".7"/><path d="M11 1H15.1V13H11Z" fill="#ececf0"/><path d="M13.2 1H15.1V13H13.2Z" fill="#e2e2e6"/><path d="M.2 11.200L2.800 10.100L6.200 12.900L11.300 8.600L12.800 8.900L6.600 16L5.400 16Z" fill="#3aa624" stroke="#2c8c1c" stroke-width=".5"/></svg><span class="it"><span style="letter-spacing:-0.133px">Completed</span></span></div>
<div class="c wi" style="left:638px;top:832px;width:140px"><svg class="ic" width="16" height="16" viewBox="0 0 16 16" style=""><circle cx="8" cy="8" r="7.6" fill="url(#gN)" stroke="#0e8512" stroke-width=".8"/><ellipse cx="7.600" cy="4.400" rx="4.200" ry="2.500" fill="#fff" opacity=".35"/></svg><span class="it"><span style="letter-spacing:-0.242px">Normal</span></span></div>
<div class="c" style="left:778px;top:832px;width:142px"><span style="letter-spacing:-0.209px">Employee 3</span></div>
<div class="c pr" style="left:920px;top:832px;width:152px"><span style="letter-spacing:-0.009px">Product 3</span></div>
<div class="c last" style="left:1072px;top:832px;width:201px"><span style="letter-spacing:-0.041px">Marketing Department</span></div>
<div class="c nm" style="left:102px;top:851px;width:105px"><span style="letter-spacing:-0.171px">Phase 3.3</span></div>
<div class="c ctr" style="left:207px;top:851px;width:156px"></div>
<div class="c ctr" style="left:363px;top:851px;width:148px"></div>
<div class="c" style="left:511px;top:851px;width:127px"></div>
<div class="c" style="left:638px;top:851px;width:140px"></div>
<div class="c" style="left:778px;top:851px;width:142px"></div>
<div class="c pr" style="left:920px;top:851px;width:152px"><span style="letter-spacing:-0.009px">Product 1</span></div>
<div class="c last" style="left:1072px;top:851px;width:201px"></div>
<i class="hl" style="left:21px;top:138px;width:6px"></i>
<svg class="ex" width="9" height="9" viewBox="0 0 9 9" style="left:12px;top:134px"><rect x=".5" y=".5" width="8" height="8" rx=".8" fill="#fdfdfd" stroke="#929292"/><rect x="1.2" y="5" width="6.6" height="2.800" fill="#e3e5ec"/><path d="M2 4.5H7" stroke="#1c1c2c" stroke-width="1"/></svg>
<span class="ti" style="left:26px;top:131px"><svg class="ic" width="16" height="16" viewBox="0 0 16 16" style=""><path d="M4.6 1.9Q4.6 .7 5.8 .7H8.5L9.7 1.9H14.5Q15.6 1.9 15.6 3V8.2Q15.6 9.3 14.5 9.3H5.7Q4.6 9.3 4.6 8.2Z" fill="#f8e078" stroke="#e6bb3c" stroke-width=".7"/><path d="M5 3.600H15.2V8.1Q15.2 8.900 14.400 8.900H5.800Q5 8.900 5 8.100Z" fill="url(#gF)"/><circle cx="5.3" cy="10.1" r="5.35" fill="#8a8a8e"/><circle cx="5.3" cy="10.1" r="4.4" fill="#fbfbfb"/><circle cx="5.3" cy="10.1" r="3.5" fill="#050505"/><path d="M5.4 8V10.4H7" stroke="#fff" stroke-width="1.05" fill="none"/></svg></span>
<i class="vl" style="left:35px;top:148px;height:10px"></i>
<i class="hl" style="left:40px;top:157px;width:6px"></i>
<svg class="ex" width="9" height="9" viewBox="0 0 9 9" style="left:31px;top:153px"><rect x=".5" y=".5" width="8" height="8" rx=".8" fill="#fdfdfd" stroke="#929292"/><rect x="1.2" y="5" width="6.6" height="2.800" fill="#e3e5ec"/><path d="M2 4.5H7" stroke="#1c1c2c" stroke-width="1"/></svg>
<span class="ti" style="left:45px;top:150px"><svg class="ic" width="16" height="16" viewBox="0 0 16 16" style=""><path d="M4.6 1.9Q4.6 .7 5.8 .7H8.5L9.7 1.9H14.5Q15.6 1.9 15.6 3V8.2Q15.6 9.3 14.5 9.3H5.7Q4.6 9.3 4.6 8.2Z" fill="#f8e078" stroke="#e6bb3c" stroke-width=".7"/><path d="M5 3.600H15.2V8.1Q15.2 8.900 14.400 8.900H5.800Q5 8.900 5 8.100Z" fill="url(#gF)"/><circle cx="5.3" cy="10.1" r="5.35" fill="#8a8a8e"/><circle cx="5.3" cy="10.1" r="4.4" fill="#fbfbfb"/><circle cx="5.3" cy="10.1" r="3.5" fill="#050505"/><path d="M5.4 8V10.4H7" stroke="#fff" stroke-width="1.05" fill="none"/></svg></span>
<i class="vl" style="left:54px;top:167px;height:19px"></i>
<i class="hl" style="left:59px;top:176px;width:6px"></i>
<svg class="ex" width="9" height="9" viewBox="0 0 9 9" style="left:50px;top:172px"><rect x=".5" y=".5" width="8" height="8" rx=".8" fill="#fdfdfd" stroke="#929292"/><rect x="1.2" y="5" width="6.6" height="2.800" fill="#e3e5ec"/><path d="M2 4.5H7" stroke="#1c1c2c" stroke-width="1"/></svg>
<span class="ti" style="left:64px;top:169px"><svg class="ic" width="16" height="16" viewBox="0 0 16 16" style=""><path d="M4.6 1.9Q4.6 .7 5.8 .7H8.5L9.7 1.9H14.5Q15.6 1.9 15.6 3V8.2Q15.6 9.3 14.5 9.3H5.7Q4.6 9.3 4.6 8.2Z" fill="#f8e078" stroke="#e6bb3c" stroke-width=".7"/><path d="M5 3.600H15.2V8.1Q15.2 8.900 14.400 8.900H5.800Q5 8.900 5 8.100Z" fill="url(#gF)"/><circle cx="5.3" cy="10.1" r="5.35" fill="#8a8a8e"/><circle cx="5.3" cy="10.1" r="4.4" fill="#fbfbfb"/><circle cx="5.3" cy="10.1" r="3.5" fill="#050505"/><path d="M5.4 8V10.4H7" stroke="#fff" stroke-width="1.05" fill="none"/></svg></span>
<i class="vl" style="left:54px;top:186px;height:19px"></i>
<i class="vl" style="left:73px;top:186px;height:19px"></i>
<i class="hl" style="left:78px;top:195px;width:6px"></i>
<svg class="ex" width="9" height="9" viewBox="0 0 9 9" style="left:69px;top:191px"><rect x=".5" y=".5" width="8" height="8" rx=".8" fill="#fdfdfd" stroke="#929292"/><rect x="1.2" y="5" width="6.6" height="2.800" fill="#e3e5ec"/><path d="M2 4.5H7" stroke="#1c1c2c" stroke-width="1"/></svg>
<span class="ti" style="left:83px;top:188px"><svg class="ic" width="16" height="16" viewBox="0 0 16 16" style=""><path d="M4.6 1.9Q4.6 .7 5.8 .7H8.5L9.7 1.9H14.5Q15.6 1.9 15.6 3V8.2Q15.6 9.3 14.5 9.3H5.7Q4.6 9.3 4.6 8.2Z" fill="#f8e078" stroke="#e6bb3c" stroke-width=".7"/><path d="M5 3.600H15.2V8.1Q15.2 8.900 14.400 8.900H5.800Q5 8.900 5 8.100Z" fill="url(#gF)"/><circle cx="5.3" cy="10.1" r="5.35" fill="#8a8a8e"/><circle cx="5.3" cy="10.1" r="4.4" fill="#fbfbfb"/><circle cx="5.3" cy="10.1" r="3.5" fill="#050505"/><path d="M5.4 8V10.4H7" stroke="#fff" stroke-width="1.05" fill="none"/></svg></span>
<i class="vl" style="left:54px;top:205px;height:19px"></i>
<i class="vl" style="left:73px;top:205px;height:19px"></i>
<i class="vl" style="left:92px;top:205px;height:19px"></i>
<i class="hl" style="left:93px;top:214px;width:10px"></i>
<span class="ti" style="left:102px;top:207px"><svg class="ic" width="16" height="16" viewBox="0 0 16 16" style=""><path d="M6.6 .7H15.3V13.2H6.6Z" fill="#f4f4f6" stroke="#c9c9cd" stroke-width=".7"/><path d="M10.5 1.1H15V12.8H10.5Z" fill="#dededf"/><path d="M12.8 1.1H15V12.8H12.8Z" fill="#d2d2d6"/><circle cx="5.3" cy="10.1" r="5.35" fill="#8a8a8e"/><circle cx="5.3" cy="10.1" r="4.4" fill="#fbfbfb"/><circle cx="5.3" cy="10.1" r="3.5" fill="#050505"/><path d="M5.4 8V10.4H7" stroke="#fff" stroke-width="1.05" fill="none"/></svg></span>
<i class="vl" style="left:54px;top:224px;height:19px"></i>
<i class="vl" style="left:73px;top:224px;height:19px"></i>
<i class="vl" style="left:92px;top:224px;height:19px"></i>
<i class="hl" style="left:93px;top:233px;width:10px"></i>
<span class="ti" style="left:102px;top:226px"><svg class="ic" width="16" height="16" viewBox="0 0 16 16" style=""><path d="M6.6 .7H15.3V13.2H6.6Z" fill="#f4f4f6" stroke="#c9c9cd" stroke-width=".7"/><path d="M10.5 1.1H15V12.8H10.5Z" fill="#dededf"/><path d="M12.8 1.1H15V12.8H12.8Z" fill="#d2d2d6"/><circle cx="5.3" cy="10.1" r="5.35" fill="#8a8a8e"/><circle cx="5.3" cy="10.1" r="4.4" fill="#fbfbfb"/><circle cx="5.3" cy="10.1" r="3.5" fill="#050505"/><path d="M5.4 8V10.4H7" stroke="#fff" stroke-width="1.05" fill="none"/></svg></span>
<i class="vl" style="left:54px;top:243px;height:19px"></i>
<i class="vl" style="left:73px;top:243px;height:19px"></i>
<i class="vl" style="left:92px;top:243px;height:10px"></i>
<i class="hl" style="left:93px;top:252px;width:10px"></i>
<span class="ti" style="left:102px;top:245px"><svg class="ic" width="16" height="16" viewBox="0 0 16 16" style=""><path d="M6.6 .7H15.3V13.2H6.6Z" fill="#f4f4f6" stroke="#c9c9cd" stroke-width=".7"/><path d="M10.5 1.1H15V12.8H10.5Z" fill="#dededf"/><path d="M12.8 1.1H15V12.8H12.8Z" fill="#d2d2d6"/><circle cx="5.3" cy="10.1" r="5.35" fill="#8a8a8e"/><circle cx="5.3" cy="10.1" r="4.4" fill="#fbfbfb"/><circle cx="5.3" cy="10.1" r="3.5" fill="#050505"/><path d="M5.4 8V10.4H7" stroke="#fff" stroke-width="1.05" fill="none"/></svg></span>
<i class="vl" style="left:54px;top:262px;height:19px"></i>
<i class="vl" style="left:73px;top:262px;height:19px"></i>
<i class="hl" style="left:78px;top:271px;width:6px"></i>
<svg class="ex" width="9" height="9" viewBox="0 0 9 9" style="left:69px;top:267px"><rect x=".5" y=".5" width="8" height="8" rx=".8" fill="#fdfdfd" stroke="#929292"/><rect x="1.2" y="5" width="6.6" height="2.800" fill="#e3e5ec"/><path d="M2 4.5H7" stroke="#1c1c2c" stroke-width="1"/></svg>
<span class="ti" style="left:83px;top:264px"><svg class="ic" width="16" height="16" viewBox="0 0 16 16" style=""><path d="M4.6 1.9Q4.6 .7 5.8 .7H8.5L9.7 1.9H14.5Q15.6 1.9 15.6 3V8.2Q15.6 9.3 14.5 9.3H5.7Q4.6 9.3 4.6 8.2Z" fill="#f8e078" stroke="#e6bb3c" stroke-width=".7"/><path d="M5 3.600H15.2V8.1Q15.2 8.900 14.400 8.900H5.800Q5 8.900 5 8.100Z" fill="url(#gF)"/><circle cx="5.3" cy="10.1" r="5.35" fill="#8a8a8e"/><circle cx="5.3" cy="10.1" r="4.4" fill="#fbfbfb"/><circle cx="5.3" cy="10.1" r="3.5" fill="#050505"/><path d="M5.4 8V10.4H7" stroke="#fff" stroke-width="1.05" fill="none"/></svg></span>
<i class="vl" style="left:54px;top:281px;height:19px"></i>
<i class="vl" style="left:73px;top:281px;height:19px"></i>
<i class="vl" style="left:92px;top:281px;height:19px"></i>
<i class="hl" style="left:93px;top:290px;width:10px"></i>
<span class="ti" style="left:102px;top:283px"><svg class="ic" width="16" height="16" viewBox="0 0 16 16" style=""><path d="M6.6 .7H15.3V13.2H6.6Z" fill="#f4f4f6" stroke="#c9c9cd" stroke-width=".7"/><path d="M10.5 1.1H15V12.8H10.5Z" fill="#dededf"/><path d="M12.8 1.1H15V12.8H12.8Z" fill="#d2d2d6"/><circle cx="5.3" cy="10.1" r="5.35" fill="#8a8a8e"/><circle cx="5.3" cy="10.1" r="4.4" fill="#fbfbfb"/><circle cx="5.3" cy="10.1" r="3.5" fill="#050505"/><path d="M5.4 8V10.4H7" stroke="#fff" stroke-width="1.05" fill="none"/></svg></span>
<i class="vl" style="left:54px;top:300px;height:19px"></i>
<i class="vl" style="left:73px;top:300px;height:19px"></i>
<i class="vl" style="left:92px;top:300px;height:19px"></i>
<i class="hl" style="left:93px;top:309px;width:10px"></i>
<span class="ti" style="left:102px;top:302px"><svg class="ic" width="16" height="16" viewBox="0 0 16 16" style=""><path d="M6.6 .7H15.3V13.2H6.6Z" fill="#f4f4f6" stroke="#c9c9cd" stroke-width=".7"/><path d="M10.5 1.1H15V12.8H10.5Z" fill="#dededf"/><path d="M12.8 1.1H15V12.8H12.8Z" fill="#d2d2d6"/><circle cx="5.3" cy="10.1" r="5.35" fill="#8a8a8e"/><circle cx="5.3" cy="10.1" r="4.4" fill="#fbfbfb"/><circle cx="5.3" cy="10.1" r="3.5" fill="#050505"/><path d="M5.4 8V10.4H7" stroke="#fff" stroke-width="1.05" fill="none"/></svg></span>
<i class="vl" style="left:54px;top:319px;height:19px"></i>
<i class="vl" style="left:73px;top:319px;height:19px"></i>
<i class="vl" style="left:92px;top:319px;height:10px"></i>
<i class="hl" style="left:93px;top:328px;width:10px"></i>
<span class="ti" style="left:102px;top:321px"><svg class="ic" width="16" height="16" viewBox="0 0 16 16" style=""><path d="M6.6 .7H15.3V13.2H6.6Z" fill="#f4f4f6" stroke="#c9c9cd" stroke-width=".7"/><path d="M10.5 1.1H15V12.8H10.5Z" fill="#dededf"/><path d="M12.8 1.1H15V12.8H12.8Z" fill="#d2d2d6"/><circle cx="5.3" cy="10.1" r="5.35" fill="#8a8a8e"/><circle cx="5.3" cy="10.1" r="4.4" fill="#fbfbfb"/><circle cx="5.3" cy="10.1" r="3.5" fill="#050505"/><path d="M5.4 8V10.4H7" stroke="#fff" stroke-width="1.05" fill="none"/></svg></span>
<i class="vl" style="left:54px;top:338px;height:19px"></i>
<i class="vl" style="left:73px;top:338px;height:10px"></i>
<i class="hl" style="left:78px;top:347px;width:6px"></i>
<svg class="ex" width="9" height="9" viewBox="0 0 9 9" style="left:69px;top:343px"><rect x=".5" y=".5" width="8" height="8" rx=".8" fill="#fdfdfd" stroke="#929292"/><rect x="1.2" y="5" width="6.6" height="2.800" fill="#e3e5ec"/><path d="M2 4.5H7" stroke="#1c1c2c" stroke-width="1"/></svg>
<span class="ti" style="left:83px;top:340px"><svg class="ic" width="16" height="16" viewBox="0 0 16 16" style=""><path d="M4.6 1.9Q4.6 .7 5.8 .7H8.5L9.7 1.9H14.5Q15.6 1.9 15.6 3V8.2Q15.6 9.3 14.5 9.3H5.7Q4.6 9.3 4.6 8.2Z" fill="#f8e078" stroke="#e6bb3c" stroke-width=".7"/><path d="M5 3.600H15.2V8.1Q15.2 8.900 14.400 8.900H5.800Q5 8.900 5 8.100Z" fill="url(#gF)"/><circle cx="5.3" cy="10.1" r="5.35" fill="#8a8a8e"/><circle cx="5.3" cy="10.1" r="4.4" fill="#fbfbfb"/><circle cx="5.3" cy="10.1" r="3.5" fill="#050505"/><path d="M5.4 8V10.4H7" stroke="#fff" stroke-width="1.05" fill="none"/></svg></span>
<i class="vl" style="left:54px;top:357px;height:19px"></i>
<i class="vl" style="left:92px;top:357px;height:19px"></i>
<i class="hl" style="left:93px;top:366px;width:10px"></i>
<span class="ti" style="left:102px;top:359px"><svg class="ic" width="16" height="16" viewBox="0 0 16 16" style=""><path d="M6.6 .7H15.3V13.2H6.6Z" fill="#f4f4f6" stroke="#c9c9cd" stroke-width=".7"/><path d="M10.5 1.1H15V12.8H10.5Z" fill="#dededf"/><path d="M12.8 1.1H15V12.8H12.8Z" fill="#d2d2d6"/><circle cx="5.3" cy="10.1" r="5.35" fill="#8a8a8e"/><circle cx="5.3" cy="10.1" r="4.4" fill="#fbfbfb"/><circle cx="5.3" cy="10.1" r="3.5" fill="#050505"/><path d="M5.4 8V10.4H7" stroke="#fff" stroke-width="1.05" fill="none"/></svg></span>
<i class="vl" style="left:54px;top:376px;height:19px"></i>
<i class="vl" style="left:92px;top:376px;height:19px"></i>
<i class="hl" style="left:93px;top:385px;width:10px"></i>
<span class="ti" style="left:102px;top:378px"><svg class="ic" width="16" height="16" viewBox="0 0 16 16" style=""><path d="M6.6 .7H15.3V13.2H6.6Z" fill="#f4f4f6" stroke="#c9c9cd" stroke-width=".7"/><path d="M10.5 1.1H15V12.8H10.5Z" fill="#dededf"/><path d="M12.8 1.1H15V12.8H12.8Z" fill="#d2d2d6"/><circle cx="5.3" cy="10.1" r="5.35" fill="#8a8a8e"/><circle cx="5.3" cy="10.1" r="4.4" fill="#fbfbfb"/><circle cx="5.3" cy="10.1" r="3.5" fill="#050505"/><path d="M5.4 8V10.4H7" stroke="#fff" stroke-width="1.05" fill="none"/></svg></span>
<i class="vl" style="left:54px;top:395px;height:19px"></i>
<i class="vl" style="left:92px;top:395px;height:19px"></i>
<i class="hl" style="left:93px;top:404px;width:10px"></i>
<span class="ti" style="left:102px;top:397px"><svg class="ic" width="16" height="16" viewBox="0 0 16 16" style=""><path d="M6.6 .7H15.3V13.2H6.6Z" fill="#f4f4f6" stroke="#c9c9cd" stroke-width=".7"/><path d="M10.5 1.1H15V12.8H10.5Z" fill="#dededf"/><path d="M12.8 1.1H15V12.8H12.8Z" fill="#d2d2d6"/><circle cx="5.3" cy="10.1" r="5.35" fill="#8a8a8e"/><circle cx="5.3" cy="10.1" r="4.4" fill="#fbfbfb"/><circle cx="5.3" cy="10.1" r="3.5" fill="#050505"/><path d="M5.4 8V10.4H7" stroke="#fff" stroke-width="1.05" fill="none"/></svg></span>
<i class="vl" style="left:54px;top:414px;height:19px"></i>
<i class="vl" style="left:92px;top:414px;height:10px"></i>
<i class="hl" style="left:93px;top:423px;width:10px"></i>
<span class="ti" style="left:102px;top:416px"><svg class="ic" width="16" height="16" viewBox="0 0 16 16" style=""><path d="M6.6 .7H15.3V13.2H6.6Z" fill="#f4f4f6" stroke="#c9c9cd" stroke-width=".7"/><path d="M10.5 1.1H15V12.8H10.5Z" fill="#dededf"/><path d="M12.8 1.1H15V12.8H12.8Z" fill="#d2d2d6"/><circle cx="5.3" cy="10.1" r="5.35" fill="#8a8a8e"/><circle cx="5.3" cy="10.1" r="4.4" fill="#fbfbfb"/><circle cx="5.3" cy="10.1" r="3.5" fill="#050505"/><path d="M5.4 8V10.4H7" stroke="#fff" stroke-width="1.05" fill="none"/></svg></span>
<i class="vl" style="left:54px;top:433px;height:19px"></i>
<i class="hl" style="left:59px;top:442px;width:6px"></i>
<svg class="ex" width="9" height="9" viewBox="0 0 9 9" style="left:50px;top:438px"><rect x=".5" y=".5" width="8" height="8" rx=".8" fill="#fdfdfd" stroke="#929292"/><rect x="1.2" y="5" width="6.6" height="2.800" fill="#e3e5ec"/><path d="M2 4.5H7" stroke="#1c1c2c" stroke-width="1"/></svg>
<span class="ti" style="left:64px;top:435px"><svg class="ic" width="16" height="16" viewBox="0 0 16 16" style=""><path d="M4.6 1.9Q4.6 .7 5.8 .7H8.5L9.7 1.9H14.5Q15.6 1.9 15.6 3V8.2Q15.6 9.3 14.5 9.3H5.7Q4.6 9.3 4.6 8.2Z" fill="#f8e078" stroke="#e6bb3c" stroke-width=".7"/><path d="M5 3.600H15.2V8.1Q15.2 8.900 14.400 8.900H5.800Q5 8.900 5 8.100Z" fill="url(#gF)"/><circle cx="5.3" cy="10.1" r="5.35" fill="#8a8a8e"/><circle cx="5.3" cy="10.1" r="4.4" fill="#fbfbfb"/><circle cx="5.3" cy="10.1" r="3.5" fill="#050505"/><path d="M5.4 8V10.4H7" stroke="#fff" stroke-width="1.05" fill="none"/></svg></span>
<i class="vl" style="left:54px;top:452px;height:19px"></i>
<i class="vl" style="left:73px;top:452px;height:19px"></i>
<i class="hl" style="left:78px;top:461px;width:6px"></i>
<svg class="ex" width="9" height="9" viewBox="0 0 9 9" style="left:69px;top:457px"><rect x=".5" y=".5" width="8" height="8" rx=".8" fill="#fdfdfd" stroke="#929292"/><rect x="1.2" y="5" width="6.6" height="2.800" fill="#e3e5ec"/><path d="M2 4.5H7" stroke="#1c1c2c" stroke-width="1"/></svg>
<span class="ti" style="left:83px;top:454px"><svg class="ic" width="16" height="16" viewBox="0 0 16 16" style=""><path d="M4.6 1.9Q4.6 .7 5.8 .7H8.5L9.7 1.9H14.5Q15.6 1.9 15.6 3V8.2Q15.6 9.3 14.5 9.3H5.7Q4.6 9.3 4.6 8.2Z" fill="#f8e078" stroke="#e6bb3c" stroke-width=".7"/><path d="M5 3.600H15.2V8.1Q15.2 8.900 14.400 8.900H5.800Q5 8.900 5 8.100Z" fill="url(#gF)"/><circle cx="5.3" cy="10.1" r="5.35" fill="#8a8a8e"/><circle cx="5.3" cy="10.1" r="4.4" fill="#fbfbfb"/><circle cx="5.3" cy="10.1" r="3.5" fill="#050505"/><path d="M5.4 8V10.4H7" stroke="#fff" stroke-width="1.05" fill="none"/></svg></span>
<i class="vl" style="left:54px;top:471px;height:19px"></i>
<i class="vl" style="left:73px;top:471px;height:19px"></i>
<i class="vl" style="left:92px;top:471px;height:19px"></i>
<i class="hl" style="left:93px;top:480px;width:10px"></i>
<span class="ti" style="left:102px;top:473px"><svg class="ic" width="16" height="16" viewBox="0 0 16 16" style=""><path d="M6.6 .7H15.3V13.2H6.6Z" fill="#f4f4f6" stroke="#c9c9cd" stroke-width=".7"/><path d="M10.5 1.1H15V12.8H10.5Z" fill="#dededf"/><path d="M12.8 1.1H15V12.8H12.8Z" fill="#d2d2d6"/><circle cx="5.3" cy="10.1" r="5.35" fill="#8a8a8e"/><circle cx="5.3" cy="10.1" r="4.4" fill="#fbfbfb"/><circle cx="5.3" cy="10.1" r="3.5" fill="#050505"/><path d="M5.4 8V10.4H7" stroke="#fff" stroke-width="1.05" fill="none"/></svg></span>
<i class="vl" style="left:54px;top:490px;height:19px"></i>
<i class="vl" style="left:73px;top:490px;height:19px"></i>
<i class="vl" style="left:92px;top:490px;height:19px"></i>
<i class="hl" style="left:93px;top:499px;width:10px"></i>
<span class="ti" style="left:102px;top:492px"><svg class="ic" width="16" height="16" viewBox="0 0 16 16" style=""><path d="M6.6 .7H15.3V13.2H6.6Z" fill="#f4f4f6" stroke="#c9c9cd" stroke-width=".7"/><path d="M10.5 1.1H15V12.8H10.5Z" fill="#dededf"/><path d="M12.8 1.1H15V12.8H12.8Z" fill="#d2d2d6"/><circle cx="5.3" cy="10.1" r="5.35" fill="#8a8a8e"/><circle cx="5.3" cy="10.1" r="4.4" fill="#fbfbfb"/><circle cx="5.3" cy="10.1" r="3.5" fill="#050505"/><path d="M5.4 8V10.4H7" stroke="#fff" stroke-width="1.05" fill="none"/></svg></span>
<i class="vl" style="left:54px;top:509px;height:19px"></i>
<i class="vl" style="left:73px;top:509px;height:19px"></i>
<i class="vl" style="left:92px;top:509px;height:10px"></i>
<i class="hl" style="left:93px;top:518px;width:10px"></i>
<span class="ti" style="left:102px;top:511px"><svg class="ic" width="16" height="16" viewBox="0 0 16 16" style=""><path d="M6.6 .7H15.3V13.2H6.6Z" fill="#f4f4f6" stroke="#c9c9cd" stroke-width=".7"/><path d="M10.5 1.1H15V12.8H10.5Z" fill="#dededf"/><path d="M12.8 1.1H15V12.8H12.8Z" fill="#d2d2d6"/><circle cx="5.3" cy="10.1" r="5.35" fill="#8a8a8e"/><circle cx="5.3" cy="10.1" r="4.4" fill="#fbfbfb"/><circle cx="5.3" cy="10.1" r="3.5" fill="#050505"/><path d="M5.4 8V10.4H7" stroke="#fff" stroke-width="1.05" fill="none"/></svg></span>
<i class="vl" style="left:54px;top:528px;height:19px"></i>
<i class="vl" style="left:73px;top:528px;height:19px"></i>
<i class="hl" style="left:78px;top:537px;width:6px"></i>
<svg class="ex" width="9" height="9" viewBox="0 0 9 9" style="left:69px;top:533px"><rect x=".5" y=".5" width="8" height="8" rx=".8" fill="#fdfdfd" stroke="#929292"/><rect x="1.2" y="5" width="6.6" height="2.800" fill="#e3e5ec"/><path d="M2 4.5H7" stroke="#1c1c2c" stroke-width="1"/></svg>
<span class="ti" style="left:83px;top:530px"><svg class="ic" width="16" height="16" viewBox="0 0 16 16" style=""><path d="M4.6 1.9Q4.6 .7 5.8 .7H8.5L9.7 1.9H14.5Q15.6 1.9 15.6 3V8.2Q15.6 9.3 14.5 9.3H5.7Q4.6 9.3 4.6 8.2Z" fill="#f8e078" stroke="#e6bb3c" stroke-width=".7"/><path d="M5 3.600H15.2V8.1Q15.2 8.900 14.400 8.900H5.800Q5 8.900 5 8.100Z" fill="url(#gF)"/><circle cx="5.3" cy="10.1" r="5.35" fill="#8a8a8e"/><circle cx="5.3" cy="10.1" r="4.4" fill="#fbfbfb"/><circle cx="5.3" cy="10.1" r="3.5" fill="#050505"/><path d="M5.4 8V10.4H7" stroke="#fff" stroke-width="1.05" fill="none"/></svg></span>
<i class="vl" style="left:54px;top:547px;height:19px"></i>
<i class="vl" style="left:73px;top:547px;height:19px"></i>
<i class="vl" style="left:92px;top:547px;height:19px"></i>
<i class="hl" style="left:93px;top:556px;width:10px"></i>
<span class="ti" style="left:102px;top:549px"><svg class="ic" width="16" height="16" viewBox="0 0 16 16" style=""><path d="M6.6 .7H15.3V13.2H6.6Z" fill="#f4f4f6" stroke="#c9c9cd" stroke-width=".7"/><path d="M10.5 1.1H15V12.8H10.5Z" fill="#dededf"/><path d="M12.8 1.1H15V12.8H12.8Z" fill="#d2d2d6"/><circle cx="5.3" cy="10.1" r="5.35" fill="#8a8a8e"/><circle cx="5.3" cy="10.1" r="4.4" fill="#fbfbfb"/><circle cx="5.3" cy="10.1" r="3.5" fill="#050505"/><path d="M5.4 8V10.4H7" stroke="#fff" stroke-width="1.05" fill="none"/></svg></span>
<i class="vl" style="left:54px;top:566px;height:19px"></i>
<i class="vl" style="left:73px;top:566px;height:19px"></i>
<i class="vl" style="left:92px;top:566px;height:19px"></i>
<i class="hl" style="left:93px;top:575px;width:10px"></i>
<span class="ti" style="left:102px;top:568px"><svg class="ic" width="16" height="16" viewBox="0 0 16 16" style=""><path d="M6.6 .7H15.3V13.2H6.6Z" fill="#f4f4f6" stroke="#c9c9cd" stroke-width=".7"/><path d="M10.5 1.1H15V12.8H10.5Z" fill="#dededf"/><path d="M12.8 1.1H15V12.8H12.8Z" fill="#d2d2d6"/><circle cx="5.3" cy="10.1" r="5.35" fill="#8a8a8e"/><circle cx="5.3" cy="10.1" r="4.4" fill="#fbfbfb"/><circle cx="5.3" cy="10.1" r="3.5" fill="#050505"/><path d="M5.4 8V10.4H7" stroke="#fff" stroke-width="1.05" fill="none"/></svg></span>
<i class="vl" style="left:54px;top:585px;height:19px"></i>
<i class="vl" style="left:73px;top:585px;height:19px"></i>
<i class="vl" style="left:92px;top:585px;height:10px"></i>
<i class="hl" style="left:93px;top:594px;width:10px"></i>
<span class="ti" style="left:102px;top:587px"><svg class="ic" width="16" height="16" viewBox="0 0 16 16" style=""><path d="M6.6 .7H15.3V13.2H6.6Z" fill="#f4f4f6" stroke="#c9c9cd" stroke-width=".7"/><path d="M10.5 1.1H15V12.8H10.5Z" fill="#dededf"/><path d="M12.8 1.1H15V12.8H12.8Z" fill="#d2d2d6"/><circle cx="5.3" cy="10.1" r="5.35" fill="#8a8a8e"/><circle cx="5.3" cy="10.1" r="4.4" fill="#fbfbfb"/><circle cx="5.3" cy="10.1" r="3.5" fill="#050505"/><path d="M5.4 8V10.4H7" stroke="#fff" stroke-width="1.05" fill="none"/></svg></span>
<i class="vl" style="left:54px;top:604px;height:19px"></i>
<i class="vl" style="left:73px;top:604px;height:10px"></i>
<i class="hl" style="left:78px;top:613px;width:6px"></i>
<svg class="ex" width="9" height="9" viewBox="0 0 9 9" style="left:69px;top:609px"><rect x=".5" y=".5" width="8" height="8" rx=".8" fill="#fdfdfd" stroke="#929292"/><rect x="1.2" y="5" width="6.6" height="2.800" fill="#e3e5ec"/><path d="M2 4.5H7" stroke="#1c1c2c" stroke-width="1"/></svg>
<span class="ti" style="left:83px;top:606px"><svg class="ic" width="16" height="16" viewBox="0 0 16 16" style=""><path d="M4.6 1.9Q4.6 .7 5.8 .7H8.5L9.7 1.9H14.5Q15.6 1.9 15.6 3V8.2Q15.6 9.3 14.5 9.3H5.7Q4.6 9.3 4.6 8.2Z" fill="#f8e078" stroke="#e6bb3c" stroke-width=".7"/><path d="M5 3.600H15.2V8.1Q15.2 8.900 14.400 8.900H5.800Q5 8.900 5 8.100Z" fill="url(#gF)"/><circle cx="5.3" cy="10.1" r="5.35" fill="#8a8a8e"/><circle cx="5.3" cy="10.1" r="4.4" fill="#fbfbfb"/><circle cx="5.3" cy="10.1" r="3.5" fill="#050505"/><path d="M5.4 8V10.4H7" stroke="#fff" stroke-width="1.05" fill="none"/></svg></span>
<i class="vl" style="left:54px;top:623px;height:19px"></i>
<i class="vl" style="left:92px;top:623px;height:19px"></i>
<i class="hl" style="left:93px;top:632px;width:10px"></i>
<span class="ti" style="left:102px;top:625px"><svg class="ic" width="16" height="16" viewBox="0 0 16 16" style=""><path d="M6.6 .7H15.3V13.2H6.6Z" fill="#f4f4f6" stroke="#c9c9cd" stroke-width=".7"/><path d="M10.5 1.1H15V12.8H10.5Z" fill="#dededf"/><path d="M12.8 1.1H15V12.8H12.8Z" fill="#d2d2d6"/><circle cx="5.3" cy="10.1" r="5.35" fill="#8a8a8e"/><circle cx="5.3" cy="10.1" r="4.4" fill="#fbfbfb"/><circle cx="5.3" cy="10.1" r="3.5" fill="#050505"/><path d="M5.4 8V10.4H7" stroke="#fff" stroke-width="1.05" fill="none"/></svg></span>
<i class="vl" style="left:54px;top:642px;height:19px"></i>
<i class="vl" style="left:92px;top:642px;height:19px"></i>
<i class="hl" style="left:93px;top:651px;width:10px"></i>
<span class="ti" style="left:102px;top:644px"><svg class="ic" width="16" height="16" viewBox="0 0 16 16" style=""><path d="M6.6 .7H15.3V13.2H6.6Z" fill="#f4f4f6" stroke="#c9c9cd" stroke-width=".7"/><path d="M10.5 1.1H15V12.8H10.5Z" fill="#dededf"/><path d="M12.8 1.1H15V12.8H12.8Z" fill="#d2d2d6"/><circle cx="5.3" cy="10.1" r="5.35" fill="#8a8a8e"/><circle cx="5.3" cy="10.1" r="4.4" fill="#fbfbfb"/><circle cx="5.3" cy="10.1" r="3.5" fill="#050505"/><path d="M5.4 8V10.4H7" stroke="#fff" stroke-width="1.05" fill="none"/></svg></span>
<i class="vl" style="left:54px;top:661px;height:19px"></i>
<i class="vl" style="left:92px;top:661px;height:10px"></i>
<i class="hl" style="left:93px;top:670px;width:10px"></i>
<span class="ti" style="left:102px;top:663px"><svg class="ic" width="16" height="16" viewBox="0 0 16 16" style=""><path d="M6.6 .7H15.3V13.2H6.6Z" fill="#f4f4f6" stroke="#c9c9cd" stroke-width=".7"/><path d="M10.5 1.1H15V12.8H10.5Z" fill="#dededf"/><path d="M12.8 1.1H15V12.8H12.8Z" fill="#d2d2d6"/><circle cx="5.3" cy="10.1" r="5.35" fill="#8a8a8e"/><circle cx="5.3" cy="10.1" r="4.4" fill="#fbfbfb"/><circle cx="5.3" cy="10.1" r="3.5" fill="#050505"/><path d="M5.4 8V10.4H7" stroke="#fff" stroke-width="1.05" fill="none"/></svg></span>
<i class="vl" style="left:54px;top:680px;height:10px"></i>
<i class="hl" style="left:59px;top:689px;width:6px"></i>
<svg class="ex" width="9" height="9" viewBox="0 0 9 9" style="left:50px;top:685px"><rect x=".5" y=".5" width="8" height="8" rx=".8" fill="#fdfdfd" stroke="#929292"/><rect x="1.2" y="5" width="6.6" height="2.800" fill="#e3e5ec"/><path d="M2 4.5H7" stroke="#1c1c2c" stroke-width="1"/></svg>
<span class="ti" style="left:64px;top:682px"><svg class="ic" width="16" height="16" viewBox="0 0 16 16" style=""><path d="M4.6 1.9Q4.6 .7 5.8 .7H8.5L9.7 1.9H14.5Q15.6 1.9 15.6 3V8.2Q15.6 9.3 14.5 9.3H5.7Q4.6 9.3 4.6 8.2Z" fill="#f8e078" stroke="#e6bb3c" stroke-width=".7"/><path d="M5 3.600H15.2V8.1Q15.2 8.900 14.400 8.900H5.800Q5 8.900 5 8.100Z" fill="url(#gF)"/><circle cx="5.3" cy="10.1" r="5.35" fill="#8a8a8e"/><circle cx="5.3" cy="10.1" r="4.4" fill="#fbfbfb"/><circle cx="5.3" cy="10.1" r="3.5" fill="#050505"/><path d="M5.4 8V10.4H7" stroke="#fff" stroke-width="1.05" fill="none"/></svg></span>
<i class="vl" style="left:73px;top:699px;height:19px"></i>
<i class="hl" style="left:78px;top:708px;width:6px"></i>
<svg class="ex" width="9" height="9" viewBox="0 0 9 9" style="left:69px;top:704px"><rect x=".5" y=".5" width="8" height="8" rx=".8" fill="#fdfdfd" stroke="#929292"/><rect x="1.2" y="5" width="6.6" height="2.800" fill="#e3e5ec"/><path d="M2 4.5H7" stroke="#1c1c2c" stroke-width="1"/></svg>
<span class="ti" style="left:83px;top:701px"><svg class="ic" width="16" height="16" viewBox="0 0 16 16" style=""><path d="M4.6 1.9Q4.6 .7 5.8 .7H8.5L9.7 1.9H14.5Q15.6 1.9 15.6 3V8.2Q15.6 9.3 14.5 9.3H5.7Q4.6 9.3 4.6 8.2Z" fill="#f8e078" stroke="#e6bb3c" stroke-width=".7"/><path d="M5 3.600H15.2V8.1Q15.2 8.900 14.400 8.900H5.800Q5 8.900 5 8.100Z" fill="url(#gF)"/><circle cx="5.3" cy="10.1" r="5.35" fill="#8a8a8e"/><circle cx="5.3" cy="10.1" r="4.4" fill="#fbfbfb"/><circle cx="5.3" cy="10.1" r="3.5" fill="#050505"/><path d="M5.4 8V10.4H7" stroke="#fff" stroke-width="1.05" fill="none"/></svg></span>
<i class="vl" style="left:73px;top:718px;height:19px"></i>
<i class="vl" style="left:92px;top:718px;height:19px"></i>
<i class="hl" style="left:93px;top:727px;width:10px"></i>
<span class="ti" style="left:102px;top:720px"><svg class="ic" width="16" height="16" viewBox="0 0 16 16" style=""><path d="M6.6 .7H15.3V13.2H6.6Z" fill="#f4f4f6" stroke="#c9c9cd" stroke-width=".7"/><path d="M10.5 1.1H15V12.8H10.5Z" fill="#dededf"/><path d="M12.8 1.1H15V12.8H12.8Z" fill="#d2d2d6"/><circle cx="5.3" cy="10.1" r="5.35" fill="#8a8a8e"/><circle cx="5.3" cy="10.1" r="4.4" fill="#fbfbfb"/><circle cx="5.3" cy="10.1" r="3.5" fill="#050505"/><path d="M5.4 8V10.4H7" stroke="#fff" stroke-width="1.05" fill="none"/></svg></span>
<i class="vl" style="left:73px;top:737px;height:19px"></i>
<i class="vl" style="left:92px;top:737px;height:19px"></i>
<i class="hl" style="left:93px;top:746px;width:10px"></i>
<span class="ti" style="left:102px;top:739px"><svg class="ic" width="16" height="16" viewBox="0 0 16 16" style=""><path d="M6.6 .7H15.3V13.2H6.6Z" fill="#f4f4f6" stroke="#c9c9cd" stroke-width=".7"/><path d="M10.5 1.1H15V12.8H10.5Z" fill="#dededf"/><path d="M12.8 1.1H15V12.8H12.8Z" fill="#d2d2d6"/><circle cx="5.3" cy="10.1" r="5.35" fill="#8a8a8e"/><circle cx="5.3" cy="10.1" r="4.4" fill="#fbfbfb"/><circle cx="5.3" cy="10.1" r="3.5" fill="#050505"/><path d="M5.4 8V10.4H7" stroke="#fff" stroke-width="1.05" fill="none"/></svg></span>
<i class="vl" style="left:73px;top:756px;height:19px"></i>
<i class="vl" style="left:92px;top:756px;height:10px"></i>
<i class="hl" style="left:93px;top:765px;width:10px"></i>
<span class="ti" style="left:102px;top:758px"><svg class="ic" width="16" height="16" viewBox="0 0 16 16" style=""><path d="M6.6 .7H15.3V13.2H6.6Z" fill="#f4f4f6" stroke="#c9c9cd" stroke-width=".7"/><path d="M10.5 1.1H15V12.8H10.5Z" fill="#dededf"/><path d="M12.8 1.1H15V12.8H12.8Z" fill="#d2d2d6"/><circle cx="5.3" cy="10.1" r="5.35" fill="#8a8a8e"/><circle cx="5.3" cy="10.1" r="4.4" fill="#fbfbfb"/><circle cx="5.3" cy="10.1" r="3.5" fill="#050505"/><path d="M5.4 8V10.4H7" stroke="#fff" stroke-width="1.05" fill="none"/></svg></span>
<i class="vl" style="left:73px;top:775px;height:19px"></i>
<i class="hl" style="left:78px;top:784px;width:6px"></i>
<svg class="ex" width="9" height="9" viewBox="0 0 9 9" style="left:69px;top:780px"><rect x=".5" y=".5" width="8" height="8" rx=".8" fill="#fdfdfd" stroke="#929292"/><rect x="1.2" y="5" width="6.6" height="2.800" fill="#e3e5ec"/><path d="M2 4.5H7" stroke="#1c1c2c" stroke-width="1"/></svg>
<span class="ti" style="left:83px;top:777px"><svg class="ic" width="16" height="16" viewBox="0 0 16 16" style=""><path d="M4.6 1.9Q4.6 .7 5.8 .7H8.5L9.7 1.9H14.5Q15.6 1.9 15.6 3V8.2Q15.6 9.3 14.5 9.3H5.7Q4.6 9.3 4.6 8.2Z" fill="#f8e078" stroke="#e6bb3c" stroke-width=".7"/><path d="M5 3.600H15.2V8.1Q15.2 8.900 14.400 8.900H5.800Q5 8.900 5 8.100Z" fill="url(#gF)"/><circle cx="5.3" cy="10.1" r="5.35" fill="#8a8a8e"/><circle cx="5.3" cy="10.1" r="4.4" fill="#fbfbfb"/><circle cx="5.3" cy="10.1" r="3.5" fill="#050505"/><path d="M5.4 8V10.4H7" stroke="#fff" stroke-width="1.05" fill="none"/></svg></span>
<i class="vl" style="left:73px;top:794px;height:19px"></i>
<i class="vl" style="left:92px;top:794px;height:19px"></i>
<i class="hl" style="left:93px;top:803px;width:10px"></i>
<span class="ti" style="left:102px;top:796px"><svg class="ic" width="16" height="16" viewBox="0 0 16 16" style=""><path d="M6.6 .7H15.3V13.2H6.6Z" fill="#f4f4f6" stroke="#c9c9cd" stroke-width=".7"/><path d="M10.5 1.1H15V12.8H10.5Z" fill="#dededf"/><path d="M12.8 1.1H15V12.8H12.8Z" fill="#d2d2d6"/><circle cx="5.3" cy="10.1" r="5.35" fill="#8a8a8e"/><circle cx="5.3" cy="10.1" r="4.4" fill="#fbfbfb"/><circle cx="5.3" cy="10.1" r="3.5" fill="#050505"/><path d="M5.4 8V10.4H7" stroke="#fff" stroke-width="1.05" fill="none"/></svg></span>
<i class="vl" style="left:73px;top:813px;height:19px"></i>
<i class="vl" style="left:92px;top:813px;height:19px"></i>
<i class="hl" style="left:93px;top:822px;width:10px"></i>
<span class="ti" style="left:102px;top:815px"><svg class="ic" width="16" height="16" viewBox="0 0 16 16" style=""><path d="M6.6 .7H15.3V13.2H6.6Z" fill="#f4f4f6" stroke="#c9c9cd" stroke-width=".7"/><path d="M10.5 1.1H15V12.8H10.5Z" fill="#dededf"/><path d="M12.8 1.1H15V12.8H12.8Z" fill="#d2d2d6"/><circle cx="5.3" cy="10.1" r="5.35" fill="#8a8a8e"/><circle cx="5.3" cy="10.1" r="4.4" fill="#fbfbfb"/><circle cx="5.3" cy="10.1" r="3.5" fill="#050505"/><path d="M5.4 8V10.4H7" stroke="#fff" stroke-width="1.05" fill="none"/></svg></span>
<i class="vl" style="left:73px;top:832px;height:19px"></i>
<i class="vl" style="left:92px;top:832px;height:10px"></i>
<i class="hl" style="left:93px;top:841px;width:10px"></i>
<span class="ti" style="left:102px;top:834px"><svg class="ic" width="16" height="16" viewBox="0 0 16 16" style=""><path d="M6.6 .7H15.3V13.2H6.6Z" fill="#f4f4f6" stroke="#c9c9cd" stroke-width=".7"/><path d="M10.5 1.1H15V12.8H10.5Z" fill="#dededf"/><path d="M12.8 1.1H15V12.8H12.8Z" fill="#d2d2d6"/><circle cx="5.3" cy="10.1" r="5.35" fill="#8a8a8e"/><circle cx="5.3" cy="10.1" r="4.4" fill="#fbfbfb"/><circle cx="5.3" cy="10.1" r="3.5" fill="#050505"/><path d="M5.4 8V10.4H7" stroke="#fff" stroke-width="1.05" fill="none"/></svg></span>
<i class="vl" style="left:73px;top:851px;height:10px"></i>
<i class="hl" style="left:78px;top:860px;width:6px"></i>
<svg class="ex" width="9" height="9" viewBox="0 0 9 9" style="left:69px;top:856px"><rect x=".5" y=".5" width="8" height="8" rx=".8" fill="#fdfdfd" stroke="#929292"/><rect x="1.2" y="5" width="6.6" height="2.800" fill="#e3e5ec"/><path d="M2 4.5H7" stroke="#1c1c2c" stroke-width="1"/><path d="M4.5 2V7" stroke="#1c1c2c" stroke-width="1"/></svg>
<span class="ti" style="left:83px;top:853px"><svg class="ic" width="16" height="16" viewBox="0 0 16 16" style=""><path d="M4.6 1.9Q4.6 .7 5.8 .7H8.5L9.7 1.9H14.5Q15.6 1.9 15.6 3V8.2Q15.6 9.3 14.5 9.3H5.7Q4.6 9.3 4.6 8.2Z" fill="#f8e078" stroke="#e6bb3c" stroke-width=".7"/><path d="M5 3.600H15.2V8.1Q15.2 8.900 14.400 8.900H5.800Q5 8.900 5 8.100Z" fill="url(#gF)"/><circle cx="5.3" cy="10.1" r="5.35" fill="#8a8a8e"/><circle cx="5.3" cy="10.1" r="4.4" fill="#fbfbfb"/><circle cx="5.3" cy="10.1" r="3.5" fill="#050505"/><path d="M5.4 8V10.4H7" stroke="#fff" stroke-width="1.05" fill="none"/></svg></span>
<div class="abs" style="left:7px;top:870px;width:96px;height:1px;background:#a0a0a0"></div>

<!-- status bar -->
<div id="sb"><i style="left:28px"></i><i style="left:400px"></i></div>
<svg class="abs" style="left:4px;top:981px" width="17" height="8" viewBox="0 0 17 8"><rect x="0" y="0" width="17" height="8" fill="#7d7d7d"/><path d="M1 1H16L14 4H3Z" fill="#c4c4c4"/><path d="M1 1L3 4L1 7Z" fill="#d8d8d8"/><path d="M16 1L14 4L16 7Z" fill="#9a9a9a"/><path d="M3 4H14L16 7H1Z" fill="#8a8a8a"/></svg>
<svg class="abs" style="left:14px;top:988px" width="32" height="6" viewBox="0 0 32 6"><ellipse cx="16" cy="15" rx="15.500" ry="13" fill="#c4d8e8" stroke="#4a5560" stroke-width="1"/><ellipse cx="16" cy="15" rx="12" ry="11" fill="#e4eef6"/></svg>
<div id="prog">0 %</div>
</body>
</html>
